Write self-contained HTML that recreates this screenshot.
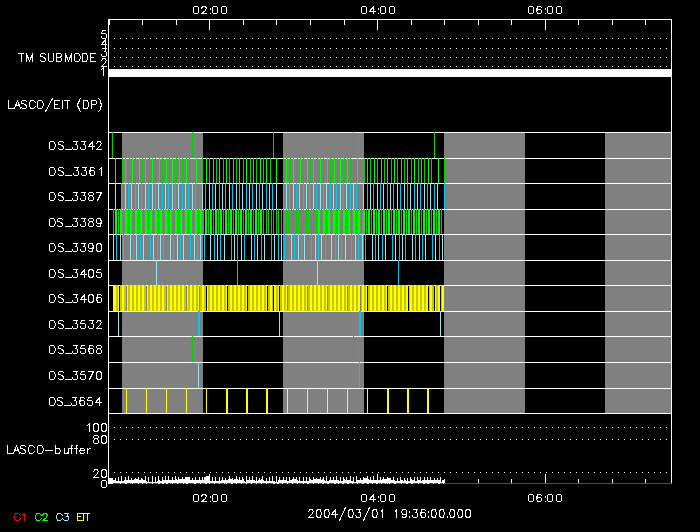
<!DOCTYPE html>
<html><head><meta charset="utf-8"><style>
html,body{margin:0;padding:0;background:#000;width:700px;height:532px;overflow:hidden}
svg{display:block}
text{font-family:"Liberation Sans",sans-serif;white-space:pre}
</style></head><body>
<svg width="700" height="532" viewBox="0 0 700 532" shape-rendering="crispEdges">
<rect width="700" height="532" fill="#000"/>
<rect x="122" y="132" width="81" height="281" fill="#808080"/>
<rect x="283" y="132" width="81" height="281" fill="#808080"/>
<rect x="444" y="132" width="81" height="281" fill="#808080"/>
<rect x="605" y="132" width="66" height="281" fill="#808080"/>
<rect x="108" y="132" width="564" height="1" fill="#ffffff"/>
<rect x="108" y="158" width="564" height="1" fill="#ffffff"/>
<rect x="108" y="183" width="564" height="1" fill="#ffffff"/>
<rect x="108" y="209" width="564" height="1" fill="#ffffff"/>
<rect x="108" y="234" width="564" height="1" fill="#ffffff"/>
<rect x="108" y="260" width="564" height="1" fill="#ffffff"/>
<rect x="108" y="285" width="564" height="1" fill="#ffffff"/>
<rect x="108" y="311" width="564" height="1" fill="#ffffff"/>
<rect x="108" y="336" width="564" height="1" fill="#ffffff"/>
<rect x="108" y="362" width="564" height="1" fill="#ffffff"/>
<rect x="108" y="388" width="564" height="1" fill="#ffffff"/>
<rect x="108" y="413" width="564" height="1" fill="#ffffff"/>
<rect x="112" y="132" width="1" height="26" fill="#00d200"/>
<rect x="192" y="132" width="1" height="26" fill="#00d200"/>
<rect x="273" y="132" width="1" height="26" fill="#00d200"/>
<rect x="353" y="132" width="1" height="26" fill="#00d200"/>
<rect x="434" y="132" width="1" height="26" fill="#00d200"/>
<rect x="115" y="158" width="1" height="25" fill="#00ff00"/>
<rect x="122" y="158" width="1" height="25" fill="#00d200"/>
<rect x="125" y="158" width="1" height="25" fill="#00ff00"/>
<rect x="129" y="158" width="1" height="25" fill="#00d200"/>
<rect x="132" y="158" width="1" height="25" fill="#00ff00"/>
<rect x="135" y="158" width="1" height="25" fill="#00d200"/>
<rect x="139" y="158" width="1" height="25" fill="#00ff00"/>
<rect x="142" y="158" width="1" height="25" fill="#00d200"/>
<rect x="145" y="158" width="1" height="25" fill="#00ff00"/>
<rect x="149" y="158" width="1" height="25" fill="#00d200"/>
<rect x="152" y="158" width="1" height="25" fill="#00ff00"/>
<rect x="155" y="158" width="1" height="25" fill="#00d200"/>
<rect x="159" y="158" width="1" height="25" fill="#00ff00"/>
<rect x="162" y="158" width="1" height="25" fill="#00d200"/>
<rect x="166" y="158" width="1" height="25" fill="#00ff00"/>
<rect x="169" y="158" width="1" height="25" fill="#00d200"/>
<rect x="172" y="158" width="1" height="25" fill="#00ff00"/>
<rect x="176" y="158" width="1" height="25" fill="#00d200"/>
<rect x="179" y="158" width="1" height="25" fill="#00ff00"/>
<rect x="182" y="158" width="1" height="25" fill="#00d200"/>
<rect x="186" y="158" width="1" height="25" fill="#00ff00"/>
<rect x="189" y="158" width="1" height="25" fill="#00d200"/>
<rect x="196" y="158" width="1" height="25" fill="#00ff00"/>
<rect x="202" y="158" width="1" height="25" fill="#00d200"/>
<rect x="206" y="158" width="1" height="25" fill="#00ff00"/>
<rect x="209" y="158" width="1" height="25" fill="#00d200"/>
<rect x="213" y="158" width="1" height="25" fill="#00ff00"/>
<rect x="216" y="158" width="1" height="25" fill="#00d200"/>
<rect x="219" y="158" width="1" height="25" fill="#00ff00"/>
<rect x="223" y="158" width="1" height="25" fill="#00d200"/>
<rect x="226" y="158" width="1" height="25" fill="#00ff00"/>
<rect x="229" y="158" width="1" height="25" fill="#00d200"/>
<rect x="233" y="158" width="1" height="25" fill="#00ff00"/>
<rect x="236" y="158" width="1" height="25" fill="#00d200"/>
<rect x="239" y="158" width="1" height="25" fill="#00ff00"/>
<rect x="243" y="158" width="1" height="25" fill="#00d200"/>
<rect x="246" y="158" width="1" height="25" fill="#00ff00"/>
<rect x="250" y="158" width="1" height="25" fill="#00d200"/>
<rect x="253" y="158" width="1" height="25" fill="#00ff00"/>
<rect x="256" y="158" width="1" height="25" fill="#00d200"/>
<rect x="260" y="158" width="1" height="25" fill="#00ff00"/>
<rect x="263" y="158" width="1" height="25" fill="#00d200"/>
<rect x="266" y="158" width="1" height="25" fill="#00ff00"/>
<rect x="270" y="158" width="1" height="25" fill="#00d200"/>
<rect x="276" y="158" width="1" height="25" fill="#00ff00"/>
<rect x="283" y="158" width="1" height="25" fill="#00d200"/>
<rect x="286" y="158" width="1" height="25" fill="#00ff00"/>
<rect x="290" y="158" width="1" height="25" fill="#00d200"/>
<rect x="293" y="158" width="1" height="25" fill="#00ff00"/>
<rect x="297" y="158" width="1" height="25" fill="#00d200"/>
<rect x="300" y="158" width="1" height="25" fill="#00ff00"/>
<rect x="303" y="158" width="1" height="25" fill="#00d200"/>
<rect x="307" y="158" width="1" height="25" fill="#00ff00"/>
<rect x="310" y="158" width="1" height="25" fill="#00d200"/>
<rect x="313" y="158" width="1" height="25" fill="#00ff00"/>
<rect x="317" y="158" width="1" height="25" fill="#00d200"/>
<rect x="320" y="158" width="1" height="25" fill="#00ff00"/>
<rect x="323" y="158" width="1" height="25" fill="#00d200"/>
<rect x="327" y="158" width="1" height="25" fill="#00ff00"/>
<rect x="330" y="158" width="1" height="25" fill="#00d200"/>
<rect x="334" y="158" width="1" height="25" fill="#00ff00"/>
<rect x="337" y="158" width="1" height="25" fill="#00d200"/>
<rect x="340" y="158" width="1" height="25" fill="#00ff00"/>
<rect x="344" y="158" width="1" height="25" fill="#00d200"/>
<rect x="347" y="158" width="1" height="25" fill="#00ff00"/>
<rect x="350" y="158" width="1" height="25" fill="#00d200"/>
<rect x="357" y="158" width="1" height="25" fill="#00ff00"/>
<rect x="364" y="158" width="1" height="25" fill="#00d200"/>
<rect x="367" y="158" width="1" height="25" fill="#00ff00"/>
<rect x="370" y="158" width="1" height="25" fill="#00d200"/>
<rect x="374" y="158" width="1" height="25" fill="#00ff00"/>
<rect x="377" y="158" width="1" height="25" fill="#00d200"/>
<rect x="381" y="158" width="1" height="25" fill="#00ff00"/>
<rect x="384" y="158" width="1" height="25" fill="#00d200"/>
<rect x="387" y="158" width="1" height="25" fill="#00ff00"/>
<rect x="391" y="158" width="1" height="25" fill="#00d200"/>
<rect x="394" y="158" width="1" height="25" fill="#00ff00"/>
<rect x="397" y="158" width="1" height="25" fill="#00d200"/>
<rect x="401" y="158" width="1" height="25" fill="#00ff00"/>
<rect x="404" y="158" width="1" height="25" fill="#00d200"/>
<rect x="407" y="158" width="1" height="25" fill="#00ff00"/>
<rect x="411" y="158" width="1" height="25" fill="#00d200"/>
<rect x="414" y="158" width="1" height="25" fill="#00ff00"/>
<rect x="418" y="158" width="1" height="25" fill="#00d200"/>
<rect x="421" y="158" width="1" height="25" fill="#00ff00"/>
<rect x="424" y="158" width="1" height="25" fill="#00d200"/>
<rect x="428" y="158" width="1" height="25" fill="#00ff00"/>
<rect x="431" y="158" width="1" height="25" fill="#00d200"/>
<rect x="438" y="158" width="1" height="25" fill="#00ff00"/>
<rect x="444" y="158" width="1" height="25" fill="#00d200"/>
<rect x="115" y="183" width="1" height="26" fill="#96e6f0"/>
<rect x="121" y="183" width="1" height="26" fill="#00c8f0"/>
<rect x="125" y="183" width="1" height="26" fill="#96e6f0"/>
<rect x="128" y="183" width="1" height="26" fill="#00c8f0"/>
<rect x="131" y="183" width="1" height="26" fill="#96e6f0"/>
<rect x="135" y="183" width="1" height="26" fill="#00c8f0"/>
<rect x="138" y="183" width="1" height="26" fill="#96e6f0"/>
<rect x="141" y="183" width="1" height="26" fill="#00c8f0"/>
<rect x="145" y="183" width="1" height="26" fill="#96e6f0"/>
<rect x="148" y="183" width="1" height="26" fill="#00c8f0"/>
<rect x="152" y="183" width="1" height="26" fill="#96e6f0"/>
<rect x="155" y="183" width="1" height="26" fill="#00c8f0"/>
<rect x="158" y="183" width="1" height="26" fill="#96e6f0"/>
<rect x="162" y="183" width="1" height="26" fill="#00c8f0"/>
<rect x="165" y="183" width="1" height="26" fill="#96e6f0"/>
<rect x="168" y="183" width="1" height="26" fill="#00c8f0"/>
<rect x="172" y="183" width="1" height="26" fill="#96e6f0"/>
<rect x="175" y="183" width="1" height="26" fill="#00c8f0"/>
<rect x="178" y="183" width="1" height="26" fill="#96e6f0"/>
<rect x="182" y="183" width="1" height="26" fill="#00c8f0"/>
<rect x="185" y="183" width="1" height="26" fill="#96e6f0"/>
<rect x="188" y="183" width="1" height="26" fill="#00c8f0"/>
<rect x="192" y="183" width="1" height="26" fill="#96e6f0"/>
<rect x="195" y="183" width="1" height="26" fill="#00c8f0"/>
<rect x="202" y="183" width="1" height="26" fill="#96e6f0"/>
<rect x="205" y="183" width="1" height="26" fill="#00c8f0"/>
<rect x="209" y="183" width="1" height="26" fill="#96e6f0"/>
<rect x="212" y="183" width="1" height="26" fill="#00c8f0"/>
<rect x="215" y="183" width="1" height="26" fill="#96e6f0"/>
<rect x="219" y="183" width="1" height="26" fill="#00c8f0"/>
<rect x="222" y="183" width="1" height="26" fill="#96e6f0"/>
<rect x="225" y="183" width="1" height="26" fill="#00c8f0"/>
<rect x="229" y="183" width="1" height="26" fill="#96e6f0"/>
<rect x="232" y="183" width="1" height="26" fill="#00c8f0"/>
<rect x="236" y="183" width="1" height="26" fill="#96e6f0"/>
<rect x="239" y="183" width="1" height="26" fill="#00c8f0"/>
<rect x="242" y="183" width="1" height="26" fill="#96e6f0"/>
<rect x="246" y="183" width="1" height="26" fill="#00c8f0"/>
<rect x="249" y="183" width="1" height="26" fill="#96e6f0"/>
<rect x="252" y="183" width="1" height="26" fill="#00c8f0"/>
<rect x="256" y="183" width="1" height="26" fill="#96e6f0"/>
<rect x="259" y="183" width="1" height="26" fill="#00c8f0"/>
<rect x="262" y="183" width="1" height="26" fill="#96e6f0"/>
<rect x="266" y="183" width="1" height="26" fill="#00c8f0"/>
<rect x="269" y="183" width="1" height="26" fill="#96e6f0"/>
<rect x="272" y="183" width="1" height="26" fill="#00c8f0"/>
<rect x="276" y="183" width="1" height="26" fill="#96e6f0"/>
<rect x="283" y="183" width="1" height="26" fill="#00c8f0"/>
<rect x="286" y="183" width="1" height="26" fill="#96e6f0"/>
<rect x="289" y="183" width="1" height="26" fill="#00c8f0"/>
<rect x="293" y="183" width="1" height="26" fill="#96e6f0"/>
<rect x="296" y="183" width="1" height="26" fill="#00c8f0"/>
<rect x="299" y="183" width="1" height="26" fill="#96e6f0"/>
<rect x="303" y="183" width="1" height="26" fill="#00c8f0"/>
<rect x="306" y="183" width="1" height="26" fill="#96e6f0"/>
<rect x="309" y="183" width="1" height="26" fill="#00c8f0"/>
<rect x="313" y="183" width="1" height="26" fill="#96e6f0"/>
<rect x="316" y="183" width="1" height="26" fill="#00c8f0"/>
<rect x="320" y="183" width="1" height="26" fill="#96e6f0"/>
<rect x="323" y="183" width="1" height="26" fill="#00c8f0"/>
<rect x="326" y="183" width="1" height="26" fill="#96e6f0"/>
<rect x="330" y="183" width="1" height="26" fill="#00c8f0"/>
<rect x="333" y="183" width="1" height="26" fill="#96e6f0"/>
<rect x="336" y="183" width="1" height="26" fill="#00c8f0"/>
<rect x="340" y="183" width="1" height="26" fill="#96e6f0"/>
<rect x="343" y="183" width="1" height="26" fill="#00c8f0"/>
<rect x="346" y="183" width="1" height="26" fill="#96e6f0"/>
<rect x="350" y="183" width="1" height="26" fill="#00c8f0"/>
<rect x="353" y="183" width="1" height="26" fill="#96e6f0"/>
<rect x="356" y="183" width="1" height="26" fill="#00c8f0"/>
<rect x="363" y="183" width="1" height="26" fill="#96e6f0"/>
<rect x="367" y="183" width="1" height="26" fill="#00c8f0"/>
<rect x="370" y="183" width="1" height="26" fill="#96e6f0"/>
<rect x="373" y="183" width="1" height="26" fill="#00c8f0"/>
<rect x="377" y="183" width="1" height="26" fill="#96e6f0"/>
<rect x="380" y="183" width="1" height="26" fill="#00c8f0"/>
<rect x="383" y="183" width="1" height="26" fill="#96e6f0"/>
<rect x="387" y="183" width="1" height="26" fill="#00c8f0"/>
<rect x="390" y="183" width="1" height="26" fill="#96e6f0"/>
<rect x="393" y="183" width="1" height="26" fill="#00c8f0"/>
<rect x="397" y="183" width="1" height="26" fill="#96e6f0"/>
<rect x="400" y="183" width="1" height="26" fill="#00c8f0"/>
<rect x="404" y="183" width="1" height="26" fill="#96e6f0"/>
<rect x="407" y="183" width="1" height="26" fill="#00c8f0"/>
<rect x="410" y="183" width="1" height="26" fill="#96e6f0"/>
<rect x="414" y="183" width="1" height="26" fill="#00c8f0"/>
<rect x="417" y="183" width="1" height="26" fill="#96e6f0"/>
<rect x="420" y="183" width="1" height="26" fill="#00c8f0"/>
<rect x="424" y="183" width="1" height="26" fill="#96e6f0"/>
<rect x="427" y="183" width="1" height="26" fill="#00c8f0"/>
<rect x="430" y="183" width="1" height="26" fill="#96e6f0"/>
<rect x="434" y="183" width="1" height="26" fill="#00c8f0"/>
<rect x="437" y="183" width="1" height="26" fill="#96e6f0"/>
<rect x="444" y="183" width="1" height="26" fill="#00c8f0"/>
<rect x="113" y="209" width="1" height="25" fill="#00d200"/>
<rect x="115" y="209" width="2" height="25" fill="#00ff00"/>
<rect x="118" y="209" width="1" height="25" fill="#00d200"/>
<rect x="120" y="209" width="2" height="25" fill="#00ff00"/>
<rect x="123" y="209" width="1" height="25" fill="#00d200"/>
<rect x="125" y="209" width="2" height="25" fill="#00ff00"/>
<rect x="128" y="209" width="1" height="25" fill="#00d200"/>
<rect x="130" y="209" width="2" height="25" fill="#00ff00"/>
<rect x="133" y="209" width="1" height="25" fill="#00d200"/>
<rect x="135" y="209" width="2" height="25" fill="#00ff00"/>
<rect x="138" y="209" width="1" height="25" fill="#00d200"/>
<rect x="140" y="209" width="2" height="25" fill="#00ff00"/>
<rect x="143" y="209" width="1" height="25" fill="#00d200"/>
<rect x="145" y="209" width="2" height="25" fill="#00ff00"/>
<rect x="148" y="209" width="1" height="25" fill="#00d200"/>
<rect x="150" y="209" width="2" height="25" fill="#00ff00"/>
<rect x="153" y="209" width="1" height="25" fill="#00d200"/>
<rect x="155" y="209" width="2" height="25" fill="#00ff00"/>
<rect x="158" y="209" width="1" height="25" fill="#00d200"/>
<rect x="160" y="209" width="2" height="25" fill="#00ff00"/>
<rect x="163" y="209" width="1" height="25" fill="#00d200"/>
<rect x="165" y="209" width="2" height="25" fill="#00ff00"/>
<rect x="168" y="209" width="1" height="25" fill="#00d200"/>
<rect x="170" y="209" width="2" height="25" fill="#00ff00"/>
<rect x="173" y="209" width="1" height="25" fill="#00d200"/>
<rect x="175" y="209" width="2" height="25" fill="#00ff00"/>
<rect x="178" y="209" width="1" height="25" fill="#00d200"/>
<rect x="180" y="209" width="2" height="25" fill="#00ff00"/>
<rect x="183" y="209" width="1" height="25" fill="#00d200"/>
<rect x="185" y="209" width="2" height="25" fill="#00ff00"/>
<rect x="188" y="209" width="1" height="25" fill="#00d200"/>
<rect x="190" y="209" width="2" height="25" fill="#00ff00"/>
<rect x="193" y="209" width="1" height="25" fill="#00d200"/>
<rect x="195" y="209" width="2" height="25" fill="#00ff00"/>
<rect x="198" y="209" width="1" height="25" fill="#00d200"/>
<rect x="200" y="209" width="2" height="25" fill="#00ff00"/>
<rect x="203" y="209" width="1" height="25" fill="#00d200"/>
<rect x="205" y="209" width="2" height="25" fill="#00ff00"/>
<rect x="208" y="209" width="1" height="25" fill="#00d200"/>
<rect x="210" y="209" width="2" height="25" fill="#00ff00"/>
<rect x="213" y="209" width="1" height="25" fill="#00d200"/>
<rect x="215" y="209" width="2" height="25" fill="#00ff00"/>
<rect x="218" y="209" width="1" height="25" fill="#00d200"/>
<rect x="220" y="209" width="2" height="25" fill="#00ff00"/>
<rect x="223" y="209" width="1" height="25" fill="#00d200"/>
<rect x="225" y="209" width="2" height="25" fill="#00ff00"/>
<rect x="228" y="209" width="1" height="25" fill="#00d200"/>
<rect x="230" y="209" width="2" height="25" fill="#00ff00"/>
<rect x="233" y="209" width="1" height="25" fill="#00d200"/>
<rect x="235" y="209" width="2" height="25" fill="#00ff00"/>
<rect x="238" y="209" width="1" height="25" fill="#00d200"/>
<rect x="240" y="209" width="2" height="25" fill="#00ff00"/>
<rect x="243" y="209" width="1" height="25" fill="#00d200"/>
<rect x="245" y="209" width="2" height="25" fill="#00ff00"/>
<rect x="248" y="209" width="1" height="25" fill="#00d200"/>
<rect x="250" y="209" width="2" height="25" fill="#00ff00"/>
<rect x="253" y="209" width="1" height="25" fill="#00d200"/>
<rect x="255" y="209" width="2" height="25" fill="#00ff00"/>
<rect x="258" y="209" width="1" height="25" fill="#00d200"/>
<rect x="260" y="209" width="2" height="25" fill="#00ff00"/>
<rect x="263" y="209" width="1" height="25" fill="#00d200"/>
<rect x="266" y="209" width="1" height="25" fill="#00d200"/>
<rect x="268" y="209" width="1" height="25" fill="#00d200"/>
<rect x="271" y="209" width="1" height="25" fill="#00d200"/>
<rect x="273" y="209" width="1" height="25" fill="#00d200"/>
<rect x="276" y="209" width="1" height="25" fill="#00d200"/>
<rect x="278" y="209" width="1" height="25" fill="#00d200"/>
<rect x="281" y="209" width="1" height="25" fill="#00d200"/>
<rect x="283" y="209" width="1" height="25" fill="#00d200"/>
<rect x="286" y="209" width="1" height="25" fill="#00d200"/>
<rect x="288" y="209" width="1" height="25" fill="#00d200"/>
<rect x="291" y="209" width="1" height="25" fill="#00d200"/>
<rect x="293" y="209" width="1" height="25" fill="#00d200"/>
<rect x="296" y="209" width="1" height="25" fill="#00d200"/>
<rect x="298" y="209" width="1" height="25" fill="#00d200"/>
<rect x="301" y="209" width="1" height="25" fill="#00d200"/>
<rect x="303" y="209" width="1" height="25" fill="#00d200"/>
<rect x="306" y="209" width="1" height="25" fill="#00d200"/>
<rect x="308" y="209" width="1" height="25" fill="#00d200"/>
<rect x="311" y="209" width="1" height="25" fill="#00d200"/>
<rect x="313" y="209" width="1" height="25" fill="#00d200"/>
<rect x="316" y="209" width="1" height="25" fill="#00d200"/>
<rect x="318" y="209" width="2" height="25" fill="#00ff00"/>
<rect x="321" y="209" width="1" height="25" fill="#00d200"/>
<rect x="323" y="209" width="2" height="25" fill="#00ff00"/>
<rect x="326" y="209" width="1" height="25" fill="#00d200"/>
<rect x="328" y="209" width="2" height="25" fill="#00ff00"/>
<rect x="331" y="209" width="1" height="25" fill="#00d200"/>
<rect x="333" y="209" width="2" height="25" fill="#00ff00"/>
<rect x="336" y="209" width="1" height="25" fill="#00d200"/>
<rect x="338" y="209" width="2" height="25" fill="#00ff00"/>
<rect x="341" y="209" width="1" height="25" fill="#00d200"/>
<rect x="343" y="209" width="2" height="25" fill="#00ff00"/>
<rect x="346" y="209" width="1" height="25" fill="#00d200"/>
<rect x="348" y="209" width="2" height="25" fill="#00ff00"/>
<rect x="351" y="209" width="1" height="25" fill="#00d200"/>
<rect x="353" y="209" width="2" height="25" fill="#00ff00"/>
<rect x="356" y="209" width="1" height="25" fill="#00d200"/>
<rect x="358" y="209" width="2" height="25" fill="#00ff00"/>
<rect x="361" y="209" width="1" height="25" fill="#00d200"/>
<rect x="363" y="209" width="2" height="25" fill="#00ff00"/>
<rect x="366" y="209" width="1" height="25" fill="#00d200"/>
<rect x="368" y="209" width="2" height="25" fill="#00ff00"/>
<rect x="371" y="209" width="1" height="25" fill="#00d200"/>
<rect x="373" y="209" width="2" height="25" fill="#00ff00"/>
<rect x="376" y="209" width="1" height="25" fill="#00d200"/>
<rect x="378" y="209" width="2" height="25" fill="#00ff00"/>
<rect x="381" y="209" width="1" height="25" fill="#00d200"/>
<rect x="383" y="209" width="2" height="25" fill="#00ff00"/>
<rect x="386" y="209" width="1" height="25" fill="#00d200"/>
<rect x="388" y="209" width="2" height="25" fill="#00ff00"/>
<rect x="391" y="209" width="1" height="25" fill="#00d200"/>
<rect x="393" y="209" width="2" height="25" fill="#00ff00"/>
<rect x="396" y="209" width="1" height="25" fill="#00d200"/>
<rect x="398" y="209" width="2" height="25" fill="#00ff00"/>
<rect x="401" y="209" width="1" height="25" fill="#00d200"/>
<rect x="403" y="209" width="2" height="25" fill="#00ff00"/>
<rect x="406" y="209" width="1" height="25" fill="#00d200"/>
<rect x="408" y="209" width="2" height="25" fill="#00ff00"/>
<rect x="411" y="209" width="1" height="25" fill="#00d200"/>
<rect x="413" y="209" width="2" height="25" fill="#00ff00"/>
<rect x="416" y="209" width="1" height="25" fill="#00d200"/>
<rect x="418" y="209" width="2" height="25" fill="#00ff00"/>
<rect x="421" y="209" width="1" height="25" fill="#00d200"/>
<rect x="423" y="209" width="2" height="25" fill="#00ff00"/>
<rect x="426" y="209" width="1" height="25" fill="#00d200"/>
<rect x="428" y="209" width="2" height="25" fill="#00ff00"/>
<rect x="431" y="209" width="1" height="25" fill="#00d200"/>
<rect x="433" y="209" width="2" height="25" fill="#00ff00"/>
<rect x="436" y="209" width="1" height="25" fill="#00d200"/>
<rect x="438" y="209" width="2" height="25" fill="#00ff00"/>
<rect x="441" y="209" width="1" height="25" fill="#00d200"/>
<rect x="113" y="234" width="1" height="26" fill="#96e6f0"/>
<rect x="116" y="234" width="1" height="26" fill="#00c8f0"/>
<rect x="120" y="234" width="1" height="26" fill="#96e6f0"/>
<rect x="123" y="234" width="1" height="26" fill="#00c8f0"/>
<rect x="130" y="234" width="1" height="26" fill="#96e6f0"/>
<rect x="133" y="234" width="1" height="26" fill="#00c8f0"/>
<rect x="136" y="234" width="1" height="26" fill="#96e6f0"/>
<rect x="140" y="234" width="1" height="26" fill="#00c8f0"/>
<rect x="143" y="234" width="1" height="26" fill="#96e6f0"/>
<rect x="150" y="234" width="1" height="26" fill="#00c8f0"/>
<rect x="153" y="234" width="1" height="26" fill="#96e6f0"/>
<rect x="157" y="234" width="1" height="26" fill="#00c8f0"/>
<rect x="160" y="234" width="1" height="26" fill="#96e6f0"/>
<rect x="163" y="234" width="1" height="26" fill="#00c8f0"/>
<rect x="170" y="234" width="1" height="26" fill="#96e6f0"/>
<rect x="173" y="234" width="1" height="26" fill="#00c8f0"/>
<rect x="177" y="234" width="1" height="26" fill="#96e6f0"/>
<rect x="180" y="234" width="1" height="26" fill="#00c8f0"/>
<rect x="183" y="234" width="1" height="26" fill="#96e6f0"/>
<rect x="190" y="234" width="1" height="26" fill="#00c8f0"/>
<rect x="194" y="234" width="1" height="26" fill="#96e6f0"/>
<rect x="197" y="234" width="1" height="26" fill="#00c8f0"/>
<rect x="200" y="234" width="1" height="26" fill="#96e6f0"/>
<rect x="204" y="234" width="1" height="26" fill="#00c8f0"/>
<rect x="210" y="234" width="1" height="26" fill="#96e6f0"/>
<rect x="214" y="234" width="1" height="26" fill="#00c8f0"/>
<rect x="217" y="234" width="1" height="26" fill="#96e6f0"/>
<rect x="220" y="234" width="1" height="26" fill="#00c8f0"/>
<rect x="224" y="234" width="1" height="26" fill="#96e6f0"/>
<rect x="231" y="234" width="1" height="26" fill="#00c8f0"/>
<rect x="234" y="234" width="1" height="26" fill="#96e6f0"/>
<rect x="237" y="234" width="1" height="26" fill="#00c8f0"/>
<rect x="241" y="234" width="1" height="26" fill="#96e6f0"/>
<rect x="244" y="234" width="1" height="26" fill="#00c8f0"/>
<rect x="251" y="234" width="1" height="26" fill="#96e6f0"/>
<rect x="254" y="234" width="1" height="26" fill="#00c8f0"/>
<rect x="257" y="234" width="1" height="26" fill="#96e6f0"/>
<rect x="261" y="234" width="1" height="26" fill="#00c8f0"/>
<rect x="264" y="234" width="1" height="26" fill="#96e6f0"/>
<rect x="271" y="234" width="1" height="26" fill="#00c8f0"/>
<rect x="274" y="234" width="1" height="26" fill="#96e6f0"/>
<rect x="278" y="234" width="1" height="26" fill="#00c8f0"/>
<rect x="281" y="234" width="1" height="26" fill="#96e6f0"/>
<rect x="284" y="234" width="1" height="26" fill="#00c8f0"/>
<rect x="291" y="234" width="1" height="26" fill="#96e6f0"/>
<rect x="294" y="234" width="1" height="26" fill="#00c8f0"/>
<rect x="298" y="234" width="1" height="26" fill="#96e6f0"/>
<rect x="301" y="234" width="1" height="26" fill="#00c8f0"/>
<rect x="304" y="234" width="1" height="26" fill="#96e6f0"/>
<rect x="311" y="234" width="1" height="26" fill="#00c8f0"/>
<rect x="315" y="234" width="1" height="26" fill="#96e6f0"/>
<rect x="318" y="234" width="1" height="26" fill="#00c8f0"/>
<rect x="321" y="234" width="1" height="26" fill="#96e6f0"/>
<rect x="325" y="234" width="1" height="26" fill="#00c8f0"/>
<rect x="331" y="234" width="1" height="26" fill="#96e6f0"/>
<rect x="335" y="234" width="1" height="26" fill="#00c8f0"/>
<rect x="338" y="234" width="1" height="26" fill="#96e6f0"/>
<rect x="341" y="234" width="1" height="26" fill="#00c8f0"/>
<rect x="345" y="234" width="1" height="26" fill="#96e6f0"/>
<rect x="351" y="234" width="1" height="26" fill="#00c8f0"/>
<rect x="355" y="234" width="1" height="26" fill="#96e6f0"/>
<rect x="358" y="234" width="1" height="26" fill="#00c8f0"/>
<rect x="362" y="234" width="1" height="26" fill="#96e6f0"/>
<rect x="365" y="234" width="1" height="26" fill="#00c8f0"/>
<rect x="372" y="234" width="1" height="26" fill="#96e6f0"/>
<rect x="375" y="234" width="1" height="26" fill="#00c8f0"/>
<rect x="378" y="234" width="1" height="26" fill="#96e6f0"/>
<rect x="382" y="234" width="1" height="26" fill="#00c8f0"/>
<rect x="385" y="234" width="1" height="26" fill="#96e6f0"/>
<rect x="392" y="234" width="1" height="26" fill="#00c8f0"/>
<rect x="395" y="234" width="1" height="26" fill="#96e6f0"/>
<rect x="399" y="234" width="1" height="26" fill="#00c8f0"/>
<rect x="402" y="234" width="1" height="26" fill="#96e6f0"/>
<rect x="405" y="234" width="1" height="26" fill="#00c8f0"/>
<rect x="412" y="234" width="1" height="26" fill="#96e6f0"/>
<rect x="415" y="234" width="1" height="26" fill="#00c8f0"/>
<rect x="419" y="234" width="1" height="26" fill="#96e6f0"/>
<rect x="422" y="234" width="1" height="26" fill="#00c8f0"/>
<rect x="425" y="234" width="1" height="26" fill="#96e6f0"/>
<rect x="432" y="234" width="1" height="26" fill="#00c8f0"/>
<rect x="435" y="234" width="1" height="26" fill="#96e6f0"/>
<rect x="439" y="234" width="1" height="26" fill="#00c8f0"/>
<rect x="442" y="234" width="1" height="26" fill="#96e6f0"/>
<rect x="156" y="260" width="1" height="25" fill="#96e6f0"/>
<rect x="237" y="260" width="1" height="25" fill="#00c8f0"/>
<rect x="317" y="260" width="1" height="25" fill="#96e6f0"/>
<rect x="398" y="260" width="1" height="25" fill="#00c8f0"/>
<rect x="113" y="285" width="331" height="26" fill="#ffff00"/>
<rect x="116" y="285" width="2" height="26" fill="#c8c800"/>
<rect x="120" y="285" width="2" height="26" fill="#c8c800"/>
<rect x="124" y="285" width="2" height="26" fill="#c8c800"/>
<rect x="128" y="285" width="2" height="26" fill="#c8c800"/>
<rect x="132" y="285" width="2" height="26" fill="#c8c800"/>
<rect x="136" y="285" width="2" height="26" fill="#c8c800"/>
<rect x="140" y="285" width="2" height="26" fill="#c8c800"/>
<rect x="144" y="285" width="2" height="26" fill="#c8c800"/>
<rect x="148" y="285" width="2" height="26" fill="#c8c800"/>
<rect x="152" y="285" width="2" height="26" fill="#c8c800"/>
<rect x="156" y="285" width="2" height="26" fill="#c8c800"/>
<rect x="160" y="285" width="2" height="26" fill="#c8c800"/>
<rect x="164" y="285" width="2" height="26" fill="#c8c800"/>
<rect x="168" y="285" width="2" height="26" fill="#c8c800"/>
<rect x="172" y="285" width="2" height="26" fill="#c8c800"/>
<rect x="176" y="285" width="2" height="26" fill="#c8c800"/>
<rect x="180" y="285" width="2" height="26" fill="#c8c800"/>
<rect x="184" y="285" width="2" height="26" fill="#c8c800"/>
<rect x="188" y="285" width="2" height="26" fill="#c8c800"/>
<rect x="192" y="285" width="2" height="26" fill="#c8c800"/>
<rect x="196" y="285" width="2" height="26" fill="#c8c800"/>
<rect x="200" y="285" width="2" height="26" fill="#c8c800"/>
<rect x="204" y="285" width="2" height="26" fill="#c8c800"/>
<rect x="208" y="285" width="2" height="26" fill="#c8c800"/>
<rect x="212" y="285" width="2" height="26" fill="#c8c800"/>
<rect x="216" y="285" width="2" height="26" fill="#c8c800"/>
<rect x="220" y="285" width="2" height="26" fill="#c8c800"/>
<rect x="224" y="285" width="2" height="26" fill="#c8c800"/>
<rect x="228" y="285" width="2" height="26" fill="#c8c800"/>
<rect x="232" y="285" width="2" height="26" fill="#c8c800"/>
<rect x="236" y="285" width="2" height="26" fill="#c8c800"/>
<rect x="240" y="285" width="2" height="26" fill="#c8c800"/>
<rect x="244" y="285" width="2" height="26" fill="#c8c800"/>
<rect x="248" y="285" width="2" height="26" fill="#c8c800"/>
<rect x="252" y="285" width="2" height="26" fill="#c8c800"/>
<rect x="256" y="285" width="2" height="26" fill="#c8c800"/>
<rect x="260" y="285" width="2" height="26" fill="#c8c800"/>
<rect x="264" y="285" width="2" height="26" fill="#c8c800"/>
<rect x="268" y="285" width="2" height="26" fill="#c8c800"/>
<rect x="272" y="285" width="2" height="26" fill="#c8c800"/>
<rect x="276" y="285" width="2" height="26" fill="#c8c800"/>
<rect x="280" y="285" width="2" height="26" fill="#c8c800"/>
<rect x="284" y="285" width="2" height="26" fill="#c8c800"/>
<rect x="288" y="285" width="2" height="26" fill="#c8c800"/>
<rect x="292" y="285" width="2" height="26" fill="#c8c800"/>
<rect x="296" y="285" width="2" height="26" fill="#c8c800"/>
<rect x="300" y="285" width="2" height="26" fill="#c8c800"/>
<rect x="304" y="285" width="2" height="26" fill="#c8c800"/>
<rect x="308" y="285" width="2" height="26" fill="#c8c800"/>
<rect x="312" y="285" width="2" height="26" fill="#c8c800"/>
<rect x="316" y="285" width="2" height="26" fill="#c8c800"/>
<rect x="320" y="285" width="2" height="26" fill="#c8c800"/>
<rect x="324" y="285" width="2" height="26" fill="#c8c800"/>
<rect x="328" y="285" width="2" height="26" fill="#c8c800"/>
<rect x="332" y="285" width="2" height="26" fill="#c8c800"/>
<rect x="336" y="285" width="2" height="26" fill="#c8c800"/>
<rect x="340" y="285" width="2" height="26" fill="#c8c800"/>
<rect x="344" y="285" width="2" height="26" fill="#c8c800"/>
<rect x="348" y="285" width="2" height="26" fill="#c8c800"/>
<rect x="352" y="285" width="2" height="26" fill="#c8c800"/>
<rect x="356" y="285" width="2" height="26" fill="#c8c800"/>
<rect x="360" y="285" width="2" height="26" fill="#c8c800"/>
<rect x="364" y="285" width="2" height="26" fill="#c8c800"/>
<rect x="368" y="285" width="2" height="26" fill="#c8c800"/>
<rect x="372" y="285" width="2" height="26" fill="#c8c800"/>
<rect x="376" y="285" width="2" height="26" fill="#c8c800"/>
<rect x="380" y="285" width="2" height="26" fill="#c8c800"/>
<rect x="384" y="285" width="2" height="26" fill="#c8c800"/>
<rect x="388" y="285" width="2" height="26" fill="#c8c800"/>
<rect x="392" y="285" width="2" height="26" fill="#c8c800"/>
<rect x="396" y="285" width="2" height="26" fill="#c8c800"/>
<rect x="400" y="285" width="2" height="26" fill="#c8c800"/>
<rect x="404" y="285" width="2" height="26" fill="#c8c800"/>
<rect x="408" y="285" width="2" height="26" fill="#c8c800"/>
<rect x="412" y="285" width="2" height="26" fill="#c8c800"/>
<rect x="416" y="285" width="2" height="26" fill="#c8c800"/>
<rect x="420" y="285" width="2" height="26" fill="#c8c800"/>
<rect x="424" y="285" width="2" height="26" fill="#c8c800"/>
<rect x="428" y="285" width="2" height="26" fill="#c8c800"/>
<rect x="432" y="285" width="2" height="26" fill="#c8c800"/>
<rect x="436" y="285" width="2" height="26" fill="#c8c800"/>
<rect x="440" y="285" width="2" height="26" fill="#c8c800"/>
<rect x="119" y="285" width="1" height="26" fill="#000000"/>
<rect x="119" y="285" width="1" height="1" fill="#ffffff"/>
<rect x="126" y="285" width="1" height="26" fill="#808080"/>
<rect x="126" y="285" width="1" height="1" fill="#ffffff"/>
<rect x="146" y="285" width="1" height="26" fill="#808080"/>
<rect x="146" y="285" width="1" height="1" fill="#ffffff"/>
<rect x="166" y="285" width="1" height="26" fill="#808080"/>
<rect x="166" y="285" width="1" height="1" fill="#ffffff"/>
<rect x="186" y="285" width="1" height="26" fill="#808080"/>
<rect x="186" y="285" width="1" height="1" fill="#ffffff"/>
<rect x="199" y="285" width="1" height="26" fill="#808080"/>
<rect x="199" y="285" width="1" height="1" fill="#ffffff"/>
<rect x="206" y="285" width="1" height="26" fill="#000000"/>
<rect x="206" y="285" width="1" height="1" fill="#ffffff"/>
<rect x="227" y="285" width="1" height="26" fill="#000000"/>
<rect x="227" y="285" width="1" height="1" fill="#ffffff"/>
<rect x="247" y="285" width="1" height="26" fill="#000000"/>
<rect x="247" y="285" width="1" height="1" fill="#ffffff"/>
<rect x="267" y="285" width="1" height="26" fill="#000000"/>
<rect x="267" y="285" width="1" height="1" fill="#ffffff"/>
<rect x="273" y="285" width="1" height="26" fill="#000000"/>
<rect x="273" y="285" width="1" height="1" fill="#ffffff"/>
<rect x="279" y="285" width="1" height="26" fill="#000000"/>
<rect x="279" y="285" width="1" height="1" fill="#ffffff"/>
<rect x="287" y="285" width="1" height="26" fill="#808080"/>
<rect x="287" y="285" width="1" height="1" fill="#ffffff"/>
<rect x="307" y="285" width="1" height="26" fill="#808080"/>
<rect x="307" y="285" width="1" height="1" fill="#ffffff"/>
<rect x="327" y="285" width="1" height="26" fill="#808080"/>
<rect x="327" y="285" width="1" height="1" fill="#ffffff"/>
<rect x="347" y="285" width="1" height="26" fill="#808080"/>
<rect x="347" y="285" width="1" height="1" fill="#ffffff"/>
<rect x="360" y="285" width="1" height="26" fill="#808080"/>
<rect x="360" y="285" width="1" height="1" fill="#ffffff"/>
<rect x="367" y="285" width="1" height="26" fill="#000000"/>
<rect x="367" y="285" width="1" height="1" fill="#ffffff"/>
<rect x="387" y="285" width="1" height="26" fill="#000000"/>
<rect x="387" y="285" width="1" height="1" fill="#ffffff"/>
<rect x="408" y="285" width="1" height="26" fill="#000000"/>
<rect x="408" y="285" width="1" height="1" fill="#ffffff"/>
<rect x="428" y="285" width="1" height="26" fill="#000000"/>
<rect x="428" y="285" width="1" height="1" fill="#ffffff"/>
<rect x="434" y="285" width="1" height="26" fill="#000000"/>
<rect x="434" y="285" width="1" height="1" fill="#ffffff"/>
<rect x="440" y="285" width="1" height="26" fill="#000000"/>
<rect x="440" y="285" width="1" height="1" fill="#ffffff"/>
<rect x="118" y="311" width="1" height="25" fill="#96e6f0"/>
<rect x="198" y="311" width="2" height="25" fill="#00c8f0"/>
<rect x="279" y="311" width="1" height="25" fill="#96e6f0"/>
<rect x="359" y="311" width="2" height="25" fill="#00c8f0"/>
<rect x="440" y="311" width="1" height="25" fill="#96e6f0"/>
<rect x="192" y="336" width="1" height="26" fill="#00d200"/>
<rect x="353" y="336" width="1" height="26" fill="#00d200"/>
<rect x="198" y="362" width="1" height="26" fill="#96e6f0"/>
<rect x="359" y="362" width="1" height="26" fill="#00c8f0"/>
<rect x="126" y="388" width="1" height="25" fill="#ffff00"/>
<rect x="146" y="388" width="1" height="25" fill="#ffff00"/>
<rect x="166" y="388" width="1" height="25" fill="#ffff00"/>
<rect x="186" y="388" width="1" height="25" fill="#ffff00"/>
<rect x="206" y="388" width="1" height="25" fill="#ffff00"/>
<rect x="226" y="388" width="2" height="25" fill="#ffff00"/>
<rect x="246" y="388" width="2" height="25" fill="#ffff00"/>
<rect x="266" y="388" width="2" height="25" fill="#ffff00"/>
<rect x="287" y="388" width="1" height="25" fill="#ffff00"/>
<rect x="307" y="388" width="1" height="25" fill="#ffff00"/>
<rect x="327" y="388" width="1" height="25" fill="#ffff00"/>
<rect x="347" y="388" width="1" height="25" fill="#ffff00"/>
<rect x="367" y="388" width="1" height="25" fill="#ffff00"/>
<rect x="387" y="388" width="2" height="25" fill="#ffff00"/>
<rect x="407" y="388" width="2" height="25" fill="#ffff00"/>
<rect x="427" y="388" width="2" height="25" fill="#ffff00"/>
<rect x="114" y="38" width="1" height="1" fill="#ffffff"/>
<rect x="120" y="38" width="1" height="1" fill="#ffffff"/>
<rect x="126" y="38" width="1" height="1" fill="#ffffff"/>
<rect x="132" y="38" width="1" height="1" fill="#ffffff"/>
<rect x="138" y="38" width="1" height="1" fill="#ffffff"/>
<rect x="144" y="38" width="1" height="1" fill="#ffffff"/>
<rect x="150" y="38" width="1" height="1" fill="#ffffff"/>
<rect x="156" y="38" width="1" height="1" fill="#ffffff"/>
<rect x="162" y="38" width="1" height="1" fill="#ffffff"/>
<rect x="168" y="38" width="1" height="1" fill="#ffffff"/>
<rect x="174" y="38" width="1" height="1" fill="#ffffff"/>
<rect x="180" y="38" width="1" height="1" fill="#ffffff"/>
<rect x="186" y="38" width="1" height="1" fill="#ffffff"/>
<rect x="192" y="38" width="1" height="1" fill="#ffffff"/>
<rect x="198" y="38" width="1" height="1" fill="#ffffff"/>
<rect x="204" y="38" width="1" height="1" fill="#ffffff"/>
<rect x="210" y="38" width="1" height="1" fill="#ffffff"/>
<rect x="216" y="38" width="1" height="1" fill="#ffffff"/>
<rect x="222" y="38" width="1" height="1" fill="#ffffff"/>
<rect x="228" y="38" width="1" height="1" fill="#ffffff"/>
<rect x="234" y="38" width="1" height="1" fill="#ffffff"/>
<rect x="240" y="38" width="1" height="1" fill="#ffffff"/>
<rect x="246" y="38" width="1" height="1" fill="#ffffff"/>
<rect x="252" y="38" width="1" height="1" fill="#ffffff"/>
<rect x="258" y="38" width="1" height="1" fill="#ffffff"/>
<rect x="264" y="38" width="1" height="1" fill="#ffffff"/>
<rect x="270" y="38" width="1" height="1" fill="#ffffff"/>
<rect x="276" y="38" width="1" height="1" fill="#ffffff"/>
<rect x="282" y="38" width="1" height="1" fill="#ffffff"/>
<rect x="288" y="38" width="1" height="1" fill="#ffffff"/>
<rect x="294" y="38" width="1" height="1" fill="#ffffff"/>
<rect x="300" y="38" width="1" height="1" fill="#ffffff"/>
<rect x="306" y="38" width="1" height="1" fill="#ffffff"/>
<rect x="312" y="38" width="1" height="1" fill="#ffffff"/>
<rect x="318" y="38" width="1" height="1" fill="#ffffff"/>
<rect x="324" y="38" width="1" height="1" fill="#ffffff"/>
<rect x="330" y="38" width="1" height="1" fill="#ffffff"/>
<rect x="336" y="38" width="1" height="1" fill="#ffffff"/>
<rect x="342" y="38" width="1" height="1" fill="#ffffff"/>
<rect x="348" y="38" width="1" height="1" fill="#ffffff"/>
<rect x="354" y="38" width="1" height="1" fill="#ffffff"/>
<rect x="360" y="38" width="1" height="1" fill="#ffffff"/>
<rect x="366" y="38" width="1" height="1" fill="#ffffff"/>
<rect x="372" y="38" width="1" height="1" fill="#ffffff"/>
<rect x="378" y="38" width="1" height="1" fill="#ffffff"/>
<rect x="384" y="38" width="1" height="1" fill="#ffffff"/>
<rect x="390" y="38" width="1" height="1" fill="#ffffff"/>
<rect x="396" y="38" width="1" height="1" fill="#ffffff"/>
<rect x="402" y="38" width="1" height="1" fill="#ffffff"/>
<rect x="408" y="38" width="1" height="1" fill="#ffffff"/>
<rect x="414" y="38" width="1" height="1" fill="#ffffff"/>
<rect x="420" y="38" width="1" height="1" fill="#ffffff"/>
<rect x="426" y="38" width="1" height="1" fill="#ffffff"/>
<rect x="432" y="38" width="1" height="1" fill="#ffffff"/>
<rect x="438" y="38" width="1" height="1" fill="#ffffff"/>
<rect x="444" y="38" width="1" height="1" fill="#ffffff"/>
<rect x="450" y="38" width="1" height="1" fill="#ffffff"/>
<rect x="456" y="38" width="1" height="1" fill="#ffffff"/>
<rect x="462" y="38" width="1" height="1" fill="#ffffff"/>
<rect x="468" y="38" width="1" height="1" fill="#ffffff"/>
<rect x="474" y="38" width="1" height="1" fill="#ffffff"/>
<rect x="480" y="38" width="1" height="1" fill="#ffffff"/>
<rect x="486" y="38" width="1" height="1" fill="#ffffff"/>
<rect x="492" y="38" width="1" height="1" fill="#ffffff"/>
<rect x="498" y="38" width="1" height="1" fill="#ffffff"/>
<rect x="504" y="38" width="1" height="1" fill="#ffffff"/>
<rect x="510" y="38" width="1" height="1" fill="#ffffff"/>
<rect x="516" y="38" width="1" height="1" fill="#ffffff"/>
<rect x="522" y="38" width="1" height="1" fill="#ffffff"/>
<rect x="528" y="38" width="1" height="1" fill="#ffffff"/>
<rect x="534" y="38" width="1" height="1" fill="#ffffff"/>
<rect x="540" y="38" width="1" height="1" fill="#ffffff"/>
<rect x="546" y="38" width="1" height="1" fill="#ffffff"/>
<rect x="552" y="38" width="1" height="1" fill="#ffffff"/>
<rect x="558" y="38" width="1" height="1" fill="#ffffff"/>
<rect x="564" y="38" width="1" height="1" fill="#ffffff"/>
<rect x="570" y="38" width="1" height="1" fill="#ffffff"/>
<rect x="576" y="38" width="1" height="1" fill="#ffffff"/>
<rect x="582" y="38" width="1" height="1" fill="#ffffff"/>
<rect x="588" y="38" width="1" height="1" fill="#ffffff"/>
<rect x="594" y="38" width="1" height="1" fill="#ffffff"/>
<rect x="600" y="38" width="1" height="1" fill="#ffffff"/>
<rect x="606" y="38" width="1" height="1" fill="#ffffff"/>
<rect x="612" y="38" width="1" height="1" fill="#ffffff"/>
<rect x="618" y="38" width="1" height="1" fill="#ffffff"/>
<rect x="624" y="38" width="1" height="1" fill="#ffffff"/>
<rect x="630" y="38" width="1" height="1" fill="#ffffff"/>
<rect x="636" y="38" width="1" height="1" fill="#ffffff"/>
<rect x="642" y="38" width="1" height="1" fill="#ffffff"/>
<rect x="648" y="38" width="1" height="1" fill="#ffffff"/>
<rect x="654" y="38" width="1" height="1" fill="#ffffff"/>
<rect x="660" y="38" width="1" height="1" fill="#ffffff"/>
<rect x="666" y="38" width="1" height="1" fill="#ffffff"/>
<rect x="114" y="48" width="1" height="1" fill="#ffffff"/>
<rect x="120" y="48" width="1" height="1" fill="#ffffff"/>
<rect x="126" y="48" width="1" height="1" fill="#ffffff"/>
<rect x="132" y="48" width="1" height="1" fill="#ffffff"/>
<rect x="138" y="48" width="1" height="1" fill="#ffffff"/>
<rect x="144" y="48" width="1" height="1" fill="#ffffff"/>
<rect x="150" y="48" width="1" height="1" fill="#ffffff"/>
<rect x="156" y="48" width="1" height="1" fill="#ffffff"/>
<rect x="162" y="48" width="1" height="1" fill="#ffffff"/>
<rect x="168" y="48" width="1" height="1" fill="#ffffff"/>
<rect x="174" y="48" width="1" height="1" fill="#ffffff"/>
<rect x="180" y="48" width="1" height="1" fill="#ffffff"/>
<rect x="186" y="48" width="1" height="1" fill="#ffffff"/>
<rect x="192" y="48" width="1" height="1" fill="#ffffff"/>
<rect x="198" y="48" width="1" height="1" fill="#ffffff"/>
<rect x="204" y="48" width="1" height="1" fill="#ffffff"/>
<rect x="210" y="48" width="1" height="1" fill="#ffffff"/>
<rect x="216" y="48" width="1" height="1" fill="#ffffff"/>
<rect x="222" y="48" width="1" height="1" fill="#ffffff"/>
<rect x="228" y="48" width="1" height="1" fill="#ffffff"/>
<rect x="234" y="48" width="1" height="1" fill="#ffffff"/>
<rect x="240" y="48" width="1" height="1" fill="#ffffff"/>
<rect x="246" y="48" width="1" height="1" fill="#ffffff"/>
<rect x="252" y="48" width="1" height="1" fill="#ffffff"/>
<rect x="258" y="48" width="1" height="1" fill="#ffffff"/>
<rect x="264" y="48" width="1" height="1" fill="#ffffff"/>
<rect x="270" y="48" width="1" height="1" fill="#ffffff"/>
<rect x="276" y="48" width="1" height="1" fill="#ffffff"/>
<rect x="282" y="48" width="1" height="1" fill="#ffffff"/>
<rect x="288" y="48" width="1" height="1" fill="#ffffff"/>
<rect x="294" y="48" width="1" height="1" fill="#ffffff"/>
<rect x="300" y="48" width="1" height="1" fill="#ffffff"/>
<rect x="306" y="48" width="1" height="1" fill="#ffffff"/>
<rect x="312" y="48" width="1" height="1" fill="#ffffff"/>
<rect x="318" y="48" width="1" height="1" fill="#ffffff"/>
<rect x="324" y="48" width="1" height="1" fill="#ffffff"/>
<rect x="330" y="48" width="1" height="1" fill="#ffffff"/>
<rect x="336" y="48" width="1" height="1" fill="#ffffff"/>
<rect x="342" y="48" width="1" height="1" fill="#ffffff"/>
<rect x="348" y="48" width="1" height="1" fill="#ffffff"/>
<rect x="354" y="48" width="1" height="1" fill="#ffffff"/>
<rect x="360" y="48" width="1" height="1" fill="#ffffff"/>
<rect x="366" y="48" width="1" height="1" fill="#ffffff"/>
<rect x="372" y="48" width="1" height="1" fill="#ffffff"/>
<rect x="378" y="48" width="1" height="1" fill="#ffffff"/>
<rect x="384" y="48" width="1" height="1" fill="#ffffff"/>
<rect x="390" y="48" width="1" height="1" fill="#ffffff"/>
<rect x="396" y="48" width="1" height="1" fill="#ffffff"/>
<rect x="402" y="48" width="1" height="1" fill="#ffffff"/>
<rect x="408" y="48" width="1" height="1" fill="#ffffff"/>
<rect x="414" y="48" width="1" height="1" fill="#ffffff"/>
<rect x="420" y="48" width="1" height="1" fill="#ffffff"/>
<rect x="426" y="48" width="1" height="1" fill="#ffffff"/>
<rect x="432" y="48" width="1" height="1" fill="#ffffff"/>
<rect x="438" y="48" width="1" height="1" fill="#ffffff"/>
<rect x="444" y="48" width="1" height="1" fill="#ffffff"/>
<rect x="450" y="48" width="1" height="1" fill="#ffffff"/>
<rect x="456" y="48" width="1" height="1" fill="#ffffff"/>
<rect x="462" y="48" width="1" height="1" fill="#ffffff"/>
<rect x="468" y="48" width="1" height="1" fill="#ffffff"/>
<rect x="474" y="48" width="1" height="1" fill="#ffffff"/>
<rect x="480" y="48" width="1" height="1" fill="#ffffff"/>
<rect x="486" y="48" width="1" height="1" fill="#ffffff"/>
<rect x="492" y="48" width="1" height="1" fill="#ffffff"/>
<rect x="498" y="48" width="1" height="1" fill="#ffffff"/>
<rect x="504" y="48" width="1" height="1" fill="#ffffff"/>
<rect x="510" y="48" width="1" height="1" fill="#ffffff"/>
<rect x="516" y="48" width="1" height="1" fill="#ffffff"/>
<rect x="522" y="48" width="1" height="1" fill="#ffffff"/>
<rect x="528" y="48" width="1" height="1" fill="#ffffff"/>
<rect x="534" y="48" width="1" height="1" fill="#ffffff"/>
<rect x="540" y="48" width="1" height="1" fill="#ffffff"/>
<rect x="546" y="48" width="1" height="1" fill="#ffffff"/>
<rect x="552" y="48" width="1" height="1" fill="#ffffff"/>
<rect x="558" y="48" width="1" height="1" fill="#ffffff"/>
<rect x="564" y="48" width="1" height="1" fill="#ffffff"/>
<rect x="570" y="48" width="1" height="1" fill="#ffffff"/>
<rect x="576" y="48" width="1" height="1" fill="#ffffff"/>
<rect x="582" y="48" width="1" height="1" fill="#ffffff"/>
<rect x="588" y="48" width="1" height="1" fill="#ffffff"/>
<rect x="594" y="48" width="1" height="1" fill="#ffffff"/>
<rect x="600" y="48" width="1" height="1" fill="#ffffff"/>
<rect x="606" y="48" width="1" height="1" fill="#ffffff"/>
<rect x="612" y="48" width="1" height="1" fill="#ffffff"/>
<rect x="618" y="48" width="1" height="1" fill="#ffffff"/>
<rect x="624" y="48" width="1" height="1" fill="#ffffff"/>
<rect x="630" y="48" width="1" height="1" fill="#ffffff"/>
<rect x="636" y="48" width="1" height="1" fill="#ffffff"/>
<rect x="642" y="48" width="1" height="1" fill="#ffffff"/>
<rect x="648" y="48" width="1" height="1" fill="#ffffff"/>
<rect x="654" y="48" width="1" height="1" fill="#ffffff"/>
<rect x="660" y="48" width="1" height="1" fill="#ffffff"/>
<rect x="666" y="48" width="1" height="1" fill="#ffffff"/>
<rect x="114" y="57" width="1" height="1" fill="#ffffff"/>
<rect x="120" y="57" width="1" height="1" fill="#ffffff"/>
<rect x="126" y="57" width="1" height="1" fill="#ffffff"/>
<rect x="132" y="57" width="1" height="1" fill="#ffffff"/>
<rect x="138" y="57" width="1" height="1" fill="#ffffff"/>
<rect x="144" y="57" width="1" height="1" fill="#ffffff"/>
<rect x="150" y="57" width="1" height="1" fill="#ffffff"/>
<rect x="156" y="57" width="1" height="1" fill="#ffffff"/>
<rect x="162" y="57" width="1" height="1" fill="#ffffff"/>
<rect x="168" y="57" width="1" height="1" fill="#ffffff"/>
<rect x="174" y="57" width="1" height="1" fill="#ffffff"/>
<rect x="180" y="57" width="1" height="1" fill="#ffffff"/>
<rect x="186" y="57" width="1" height="1" fill="#ffffff"/>
<rect x="192" y="57" width="1" height="1" fill="#ffffff"/>
<rect x="198" y="57" width="1" height="1" fill="#ffffff"/>
<rect x="204" y="57" width="1" height="1" fill="#ffffff"/>
<rect x="210" y="57" width="1" height="1" fill="#ffffff"/>
<rect x="216" y="57" width="1" height="1" fill="#ffffff"/>
<rect x="222" y="57" width="1" height="1" fill="#ffffff"/>
<rect x="228" y="57" width="1" height="1" fill="#ffffff"/>
<rect x="234" y="57" width="1" height="1" fill="#ffffff"/>
<rect x="240" y="57" width="1" height="1" fill="#ffffff"/>
<rect x="246" y="57" width="1" height="1" fill="#ffffff"/>
<rect x="252" y="57" width="1" height="1" fill="#ffffff"/>
<rect x="258" y="57" width="1" height="1" fill="#ffffff"/>
<rect x="264" y="57" width="1" height="1" fill="#ffffff"/>
<rect x="270" y="57" width="1" height="1" fill="#ffffff"/>
<rect x="276" y="57" width="1" height="1" fill="#ffffff"/>
<rect x="282" y="57" width="1" height="1" fill="#ffffff"/>
<rect x="288" y="57" width="1" height="1" fill="#ffffff"/>
<rect x="294" y="57" width="1" height="1" fill="#ffffff"/>
<rect x="300" y="57" width="1" height="1" fill="#ffffff"/>
<rect x="306" y="57" width="1" height="1" fill="#ffffff"/>
<rect x="312" y="57" width="1" height="1" fill="#ffffff"/>
<rect x="318" y="57" width="1" height="1" fill="#ffffff"/>
<rect x="324" y="57" width="1" height="1" fill="#ffffff"/>
<rect x="330" y="57" width="1" height="1" fill="#ffffff"/>
<rect x="336" y="57" width="1" height="1" fill="#ffffff"/>
<rect x="342" y="57" width="1" height="1" fill="#ffffff"/>
<rect x="348" y="57" width="1" height="1" fill="#ffffff"/>
<rect x="354" y="57" width="1" height="1" fill="#ffffff"/>
<rect x="360" y="57" width="1" height="1" fill="#ffffff"/>
<rect x="366" y="57" width="1" height="1" fill="#ffffff"/>
<rect x="372" y="57" width="1" height="1" fill="#ffffff"/>
<rect x="378" y="57" width="1" height="1" fill="#ffffff"/>
<rect x="384" y="57" width="1" height="1" fill="#ffffff"/>
<rect x="390" y="57" width="1" height="1" fill="#ffffff"/>
<rect x="396" y="57" width="1" height="1" fill="#ffffff"/>
<rect x="402" y="57" width="1" height="1" fill="#ffffff"/>
<rect x="408" y="57" width="1" height="1" fill="#ffffff"/>
<rect x="414" y="57" width="1" height="1" fill="#ffffff"/>
<rect x="420" y="57" width="1" height="1" fill="#ffffff"/>
<rect x="426" y="57" width="1" height="1" fill="#ffffff"/>
<rect x="432" y="57" width="1" height="1" fill="#ffffff"/>
<rect x="438" y="57" width="1" height="1" fill="#ffffff"/>
<rect x="444" y="57" width="1" height="1" fill="#ffffff"/>
<rect x="450" y="57" width="1" height="1" fill="#ffffff"/>
<rect x="456" y="57" width="1" height="1" fill="#ffffff"/>
<rect x="462" y="57" width="1" height="1" fill="#ffffff"/>
<rect x="468" y="57" width="1" height="1" fill="#ffffff"/>
<rect x="474" y="57" width="1" height="1" fill="#ffffff"/>
<rect x="480" y="57" width="1" height="1" fill="#ffffff"/>
<rect x="486" y="57" width="1" height="1" fill="#ffffff"/>
<rect x="492" y="57" width="1" height="1" fill="#ffffff"/>
<rect x="498" y="57" width="1" height="1" fill="#ffffff"/>
<rect x="504" y="57" width="1" height="1" fill="#ffffff"/>
<rect x="510" y="57" width="1" height="1" fill="#ffffff"/>
<rect x="516" y="57" width="1" height="1" fill="#ffffff"/>
<rect x="522" y="57" width="1" height="1" fill="#ffffff"/>
<rect x="528" y="57" width="1" height="1" fill="#ffffff"/>
<rect x="534" y="57" width="1" height="1" fill="#ffffff"/>
<rect x="540" y="57" width="1" height="1" fill="#ffffff"/>
<rect x="546" y="57" width="1" height="1" fill="#ffffff"/>
<rect x="552" y="57" width="1" height="1" fill="#ffffff"/>
<rect x="558" y="57" width="1" height="1" fill="#ffffff"/>
<rect x="564" y="57" width="1" height="1" fill="#ffffff"/>
<rect x="570" y="57" width="1" height="1" fill="#ffffff"/>
<rect x="576" y="57" width="1" height="1" fill="#ffffff"/>
<rect x="582" y="57" width="1" height="1" fill="#ffffff"/>
<rect x="588" y="57" width="1" height="1" fill="#ffffff"/>
<rect x="594" y="57" width="1" height="1" fill="#ffffff"/>
<rect x="600" y="57" width="1" height="1" fill="#ffffff"/>
<rect x="606" y="57" width="1" height="1" fill="#ffffff"/>
<rect x="612" y="57" width="1" height="1" fill="#ffffff"/>
<rect x="618" y="57" width="1" height="1" fill="#ffffff"/>
<rect x="624" y="57" width="1" height="1" fill="#ffffff"/>
<rect x="630" y="57" width="1" height="1" fill="#ffffff"/>
<rect x="636" y="57" width="1" height="1" fill="#ffffff"/>
<rect x="642" y="57" width="1" height="1" fill="#ffffff"/>
<rect x="648" y="57" width="1" height="1" fill="#ffffff"/>
<rect x="654" y="57" width="1" height="1" fill="#ffffff"/>
<rect x="660" y="57" width="1" height="1" fill="#ffffff"/>
<rect x="666" y="57" width="1" height="1" fill="#ffffff"/>
<rect x="114" y="66" width="1" height="1" fill="#ffffff"/>
<rect x="120" y="66" width="1" height="1" fill="#ffffff"/>
<rect x="126" y="66" width="1" height="1" fill="#ffffff"/>
<rect x="132" y="66" width="1" height="1" fill="#ffffff"/>
<rect x="138" y="66" width="1" height="1" fill="#ffffff"/>
<rect x="144" y="66" width="1" height="1" fill="#ffffff"/>
<rect x="150" y="66" width="1" height="1" fill="#ffffff"/>
<rect x="156" y="66" width="1" height="1" fill="#ffffff"/>
<rect x="162" y="66" width="1" height="1" fill="#ffffff"/>
<rect x="168" y="66" width="1" height="1" fill="#ffffff"/>
<rect x="174" y="66" width="1" height="1" fill="#ffffff"/>
<rect x="180" y="66" width="1" height="1" fill="#ffffff"/>
<rect x="186" y="66" width="1" height="1" fill="#ffffff"/>
<rect x="192" y="66" width="1" height="1" fill="#ffffff"/>
<rect x="198" y="66" width="1" height="1" fill="#ffffff"/>
<rect x="204" y="66" width="1" height="1" fill="#ffffff"/>
<rect x="210" y="66" width="1" height="1" fill="#ffffff"/>
<rect x="216" y="66" width="1" height="1" fill="#ffffff"/>
<rect x="222" y="66" width="1" height="1" fill="#ffffff"/>
<rect x="228" y="66" width="1" height="1" fill="#ffffff"/>
<rect x="234" y="66" width="1" height="1" fill="#ffffff"/>
<rect x="240" y="66" width="1" height="1" fill="#ffffff"/>
<rect x="246" y="66" width="1" height="1" fill="#ffffff"/>
<rect x="252" y="66" width="1" height="1" fill="#ffffff"/>
<rect x="258" y="66" width="1" height="1" fill="#ffffff"/>
<rect x="264" y="66" width="1" height="1" fill="#ffffff"/>
<rect x="270" y="66" width="1" height="1" fill="#ffffff"/>
<rect x="276" y="66" width="1" height="1" fill="#ffffff"/>
<rect x="282" y="66" width="1" height="1" fill="#ffffff"/>
<rect x="288" y="66" width="1" height="1" fill="#ffffff"/>
<rect x="294" y="66" width="1" height="1" fill="#ffffff"/>
<rect x="300" y="66" width="1" height="1" fill="#ffffff"/>
<rect x="306" y="66" width="1" height="1" fill="#ffffff"/>
<rect x="312" y="66" width="1" height="1" fill="#ffffff"/>
<rect x="318" y="66" width="1" height="1" fill="#ffffff"/>
<rect x="324" y="66" width="1" height="1" fill="#ffffff"/>
<rect x="330" y="66" width="1" height="1" fill="#ffffff"/>
<rect x="336" y="66" width="1" height="1" fill="#ffffff"/>
<rect x="342" y="66" width="1" height="1" fill="#ffffff"/>
<rect x="348" y="66" width="1" height="1" fill="#ffffff"/>
<rect x="354" y="66" width="1" height="1" fill="#ffffff"/>
<rect x="360" y="66" width="1" height="1" fill="#ffffff"/>
<rect x="366" y="66" width="1" height="1" fill="#ffffff"/>
<rect x="372" y="66" width="1" height="1" fill="#ffffff"/>
<rect x="378" y="66" width="1" height="1" fill="#ffffff"/>
<rect x="384" y="66" width="1" height="1" fill="#ffffff"/>
<rect x="390" y="66" width="1" height="1" fill="#ffffff"/>
<rect x="396" y="66" width="1" height="1" fill="#ffffff"/>
<rect x="402" y="66" width="1" height="1" fill="#ffffff"/>
<rect x="408" y="66" width="1" height="1" fill="#ffffff"/>
<rect x="414" y="66" width="1" height="1" fill="#ffffff"/>
<rect x="420" y="66" width="1" height="1" fill="#ffffff"/>
<rect x="426" y="66" width="1" height="1" fill="#ffffff"/>
<rect x="432" y="66" width="1" height="1" fill="#ffffff"/>
<rect x="438" y="66" width="1" height="1" fill="#ffffff"/>
<rect x="444" y="66" width="1" height="1" fill="#ffffff"/>
<rect x="450" y="66" width="1" height="1" fill="#ffffff"/>
<rect x="456" y="66" width="1" height="1" fill="#ffffff"/>
<rect x="462" y="66" width="1" height="1" fill="#ffffff"/>
<rect x="468" y="66" width="1" height="1" fill="#ffffff"/>
<rect x="474" y="66" width="1" height="1" fill="#ffffff"/>
<rect x="480" y="66" width="1" height="1" fill="#ffffff"/>
<rect x="486" y="66" width="1" height="1" fill="#ffffff"/>
<rect x="492" y="66" width="1" height="1" fill="#ffffff"/>
<rect x="498" y="66" width="1" height="1" fill="#ffffff"/>
<rect x="504" y="66" width="1" height="1" fill="#ffffff"/>
<rect x="510" y="66" width="1" height="1" fill="#ffffff"/>
<rect x="516" y="66" width="1" height="1" fill="#ffffff"/>
<rect x="522" y="66" width="1" height="1" fill="#ffffff"/>
<rect x="528" y="66" width="1" height="1" fill="#ffffff"/>
<rect x="534" y="66" width="1" height="1" fill="#ffffff"/>
<rect x="540" y="66" width="1" height="1" fill="#ffffff"/>
<rect x="546" y="66" width="1" height="1" fill="#ffffff"/>
<rect x="552" y="66" width="1" height="1" fill="#ffffff"/>
<rect x="558" y="66" width="1" height="1" fill="#ffffff"/>
<rect x="564" y="66" width="1" height="1" fill="#ffffff"/>
<rect x="570" y="66" width="1" height="1" fill="#ffffff"/>
<rect x="576" y="66" width="1" height="1" fill="#ffffff"/>
<rect x="582" y="66" width="1" height="1" fill="#ffffff"/>
<rect x="588" y="66" width="1" height="1" fill="#ffffff"/>
<rect x="594" y="66" width="1" height="1" fill="#ffffff"/>
<rect x="600" y="66" width="1" height="1" fill="#ffffff"/>
<rect x="606" y="66" width="1" height="1" fill="#ffffff"/>
<rect x="612" y="66" width="1" height="1" fill="#ffffff"/>
<rect x="618" y="66" width="1" height="1" fill="#ffffff"/>
<rect x="624" y="66" width="1" height="1" fill="#ffffff"/>
<rect x="630" y="66" width="1" height="1" fill="#ffffff"/>
<rect x="636" y="66" width="1" height="1" fill="#ffffff"/>
<rect x="642" y="66" width="1" height="1" fill="#ffffff"/>
<rect x="648" y="66" width="1" height="1" fill="#ffffff"/>
<rect x="654" y="66" width="1" height="1" fill="#ffffff"/>
<rect x="660" y="66" width="1" height="1" fill="#ffffff"/>
<rect x="666" y="66" width="1" height="1" fill="#ffffff"/>
<rect x="108" y="69" width="564" height="8" fill="#ffffff"/>
<rect x="114" y="427" width="1" height="1" fill="#ffffff"/>
<rect x="120" y="427" width="1" height="1" fill="#ffffff"/>
<rect x="126" y="427" width="1" height="1" fill="#ffffff"/>
<rect x="132" y="427" width="1" height="1" fill="#ffffff"/>
<rect x="138" y="427" width="1" height="1" fill="#ffffff"/>
<rect x="144" y="427" width="1" height="1" fill="#ffffff"/>
<rect x="150" y="427" width="1" height="1" fill="#ffffff"/>
<rect x="156" y="427" width="1" height="1" fill="#ffffff"/>
<rect x="162" y="427" width="1" height="1" fill="#ffffff"/>
<rect x="168" y="427" width="1" height="1" fill="#ffffff"/>
<rect x="174" y="427" width="1" height="1" fill="#ffffff"/>
<rect x="180" y="427" width="1" height="1" fill="#ffffff"/>
<rect x="186" y="427" width="1" height="1" fill="#ffffff"/>
<rect x="192" y="427" width="1" height="1" fill="#ffffff"/>
<rect x="198" y="427" width="1" height="1" fill="#ffffff"/>
<rect x="204" y="427" width="1" height="1" fill="#ffffff"/>
<rect x="210" y="427" width="1" height="1" fill="#ffffff"/>
<rect x="216" y="427" width="1" height="1" fill="#ffffff"/>
<rect x="222" y="427" width="1" height="1" fill="#ffffff"/>
<rect x="228" y="427" width="1" height="1" fill="#ffffff"/>
<rect x="234" y="427" width="1" height="1" fill="#ffffff"/>
<rect x="240" y="427" width="1" height="1" fill="#ffffff"/>
<rect x="246" y="427" width="1" height="1" fill="#ffffff"/>
<rect x="252" y="427" width="1" height="1" fill="#ffffff"/>
<rect x="258" y="427" width="1" height="1" fill="#ffffff"/>
<rect x="264" y="427" width="1" height="1" fill="#ffffff"/>
<rect x="270" y="427" width="1" height="1" fill="#ffffff"/>
<rect x="276" y="427" width="1" height="1" fill="#ffffff"/>
<rect x="282" y="427" width="1" height="1" fill="#ffffff"/>
<rect x="288" y="427" width="1" height="1" fill="#ffffff"/>
<rect x="294" y="427" width="1" height="1" fill="#ffffff"/>
<rect x="300" y="427" width="1" height="1" fill="#ffffff"/>
<rect x="306" y="427" width="1" height="1" fill="#ffffff"/>
<rect x="312" y="427" width="1" height="1" fill="#ffffff"/>
<rect x="318" y="427" width="1" height="1" fill="#ffffff"/>
<rect x="324" y="427" width="1" height="1" fill="#ffffff"/>
<rect x="330" y="427" width="1" height="1" fill="#ffffff"/>
<rect x="336" y="427" width="1" height="1" fill="#ffffff"/>
<rect x="342" y="427" width="1" height="1" fill="#ffffff"/>
<rect x="348" y="427" width="1" height="1" fill="#ffffff"/>
<rect x="354" y="427" width="1" height="1" fill="#ffffff"/>
<rect x="360" y="427" width="1" height="1" fill="#ffffff"/>
<rect x="366" y="427" width="1" height="1" fill="#ffffff"/>
<rect x="372" y="427" width="1" height="1" fill="#ffffff"/>
<rect x="378" y="427" width="1" height="1" fill="#ffffff"/>
<rect x="384" y="427" width="1" height="1" fill="#ffffff"/>
<rect x="390" y="427" width="1" height="1" fill="#ffffff"/>
<rect x="396" y="427" width="1" height="1" fill="#ffffff"/>
<rect x="402" y="427" width="1" height="1" fill="#ffffff"/>
<rect x="408" y="427" width="1" height="1" fill="#ffffff"/>
<rect x="414" y="427" width="1" height="1" fill="#ffffff"/>
<rect x="420" y="427" width="1" height="1" fill="#ffffff"/>
<rect x="426" y="427" width="1" height="1" fill="#ffffff"/>
<rect x="432" y="427" width="1" height="1" fill="#ffffff"/>
<rect x="438" y="427" width="1" height="1" fill="#ffffff"/>
<rect x="444" y="427" width="1" height="1" fill="#ffffff"/>
<rect x="450" y="427" width="1" height="1" fill="#ffffff"/>
<rect x="456" y="427" width="1" height="1" fill="#ffffff"/>
<rect x="462" y="427" width="1" height="1" fill="#ffffff"/>
<rect x="468" y="427" width="1" height="1" fill="#ffffff"/>
<rect x="474" y="427" width="1" height="1" fill="#ffffff"/>
<rect x="480" y="427" width="1" height="1" fill="#ffffff"/>
<rect x="486" y="427" width="1" height="1" fill="#ffffff"/>
<rect x="492" y="427" width="1" height="1" fill="#ffffff"/>
<rect x="498" y="427" width="1" height="1" fill="#ffffff"/>
<rect x="504" y="427" width="1" height="1" fill="#ffffff"/>
<rect x="510" y="427" width="1" height="1" fill="#ffffff"/>
<rect x="516" y="427" width="1" height="1" fill="#ffffff"/>
<rect x="522" y="427" width="1" height="1" fill="#ffffff"/>
<rect x="528" y="427" width="1" height="1" fill="#ffffff"/>
<rect x="534" y="427" width="1" height="1" fill="#ffffff"/>
<rect x="540" y="427" width="1" height="1" fill="#ffffff"/>
<rect x="546" y="427" width="1" height="1" fill="#ffffff"/>
<rect x="552" y="427" width="1" height="1" fill="#ffffff"/>
<rect x="558" y="427" width="1" height="1" fill="#ffffff"/>
<rect x="564" y="427" width="1" height="1" fill="#ffffff"/>
<rect x="570" y="427" width="1" height="1" fill="#ffffff"/>
<rect x="576" y="427" width="1" height="1" fill="#ffffff"/>
<rect x="582" y="427" width="1" height="1" fill="#ffffff"/>
<rect x="588" y="427" width="1" height="1" fill="#ffffff"/>
<rect x="594" y="427" width="1" height="1" fill="#ffffff"/>
<rect x="600" y="427" width="1" height="1" fill="#ffffff"/>
<rect x="606" y="427" width="1" height="1" fill="#ffffff"/>
<rect x="612" y="427" width="1" height="1" fill="#ffffff"/>
<rect x="618" y="427" width="1" height="1" fill="#ffffff"/>
<rect x="624" y="427" width="1" height="1" fill="#ffffff"/>
<rect x="630" y="427" width="1" height="1" fill="#ffffff"/>
<rect x="636" y="427" width="1" height="1" fill="#ffffff"/>
<rect x="642" y="427" width="1" height="1" fill="#ffffff"/>
<rect x="648" y="427" width="1" height="1" fill="#ffffff"/>
<rect x="654" y="427" width="1" height="1" fill="#ffffff"/>
<rect x="660" y="427" width="1" height="1" fill="#ffffff"/>
<rect x="666" y="427" width="1" height="1" fill="#ffffff"/>
<rect x="114" y="439" width="1" height="1" fill="#ffffff"/>
<rect x="120" y="439" width="1" height="1" fill="#ffffff"/>
<rect x="126" y="439" width="1" height="1" fill="#ffffff"/>
<rect x="132" y="439" width="1" height="1" fill="#ffffff"/>
<rect x="138" y="439" width="1" height="1" fill="#ffffff"/>
<rect x="144" y="439" width="1" height="1" fill="#ffffff"/>
<rect x="150" y="439" width="1" height="1" fill="#ffffff"/>
<rect x="156" y="439" width="1" height="1" fill="#ffffff"/>
<rect x="162" y="439" width="1" height="1" fill="#ffffff"/>
<rect x="168" y="439" width="1" height="1" fill="#ffffff"/>
<rect x="174" y="439" width="1" height="1" fill="#ffffff"/>
<rect x="180" y="439" width="1" height="1" fill="#ffffff"/>
<rect x="186" y="439" width="1" height="1" fill="#ffffff"/>
<rect x="192" y="439" width="1" height="1" fill="#ffffff"/>
<rect x="198" y="439" width="1" height="1" fill="#ffffff"/>
<rect x="204" y="439" width="1" height="1" fill="#ffffff"/>
<rect x="210" y="439" width="1" height="1" fill="#ffffff"/>
<rect x="216" y="439" width="1" height="1" fill="#ffffff"/>
<rect x="222" y="439" width="1" height="1" fill="#ffffff"/>
<rect x="228" y="439" width="1" height="1" fill="#ffffff"/>
<rect x="234" y="439" width="1" height="1" fill="#ffffff"/>
<rect x="240" y="439" width="1" height="1" fill="#ffffff"/>
<rect x="246" y="439" width="1" height="1" fill="#ffffff"/>
<rect x="252" y="439" width="1" height="1" fill="#ffffff"/>
<rect x="258" y="439" width="1" height="1" fill="#ffffff"/>
<rect x="264" y="439" width="1" height="1" fill="#ffffff"/>
<rect x="270" y="439" width="1" height="1" fill="#ffffff"/>
<rect x="276" y="439" width="1" height="1" fill="#ffffff"/>
<rect x="282" y="439" width="1" height="1" fill="#ffffff"/>
<rect x="288" y="439" width="1" height="1" fill="#ffffff"/>
<rect x="294" y="439" width="1" height="1" fill="#ffffff"/>
<rect x="300" y="439" width="1" height="1" fill="#ffffff"/>
<rect x="306" y="439" width="1" height="1" fill="#ffffff"/>
<rect x="312" y="439" width="1" height="1" fill="#ffffff"/>
<rect x="318" y="439" width="1" height="1" fill="#ffffff"/>
<rect x="324" y="439" width="1" height="1" fill="#ffffff"/>
<rect x="330" y="439" width="1" height="1" fill="#ffffff"/>
<rect x="336" y="439" width="1" height="1" fill="#ffffff"/>
<rect x="342" y="439" width="1" height="1" fill="#ffffff"/>
<rect x="348" y="439" width="1" height="1" fill="#ffffff"/>
<rect x="354" y="439" width="1" height="1" fill="#ffffff"/>
<rect x="360" y="439" width="1" height="1" fill="#ffffff"/>
<rect x="366" y="439" width="1" height="1" fill="#ffffff"/>
<rect x="372" y="439" width="1" height="1" fill="#ffffff"/>
<rect x="378" y="439" width="1" height="1" fill="#ffffff"/>
<rect x="384" y="439" width="1" height="1" fill="#ffffff"/>
<rect x="390" y="439" width="1" height="1" fill="#ffffff"/>
<rect x="396" y="439" width="1" height="1" fill="#ffffff"/>
<rect x="402" y="439" width="1" height="1" fill="#ffffff"/>
<rect x="408" y="439" width="1" height="1" fill="#ffffff"/>
<rect x="414" y="439" width="1" height="1" fill="#ffffff"/>
<rect x="420" y="439" width="1" height="1" fill="#ffffff"/>
<rect x="426" y="439" width="1" height="1" fill="#ffffff"/>
<rect x="432" y="439" width="1" height="1" fill="#ffffff"/>
<rect x="438" y="439" width="1" height="1" fill="#ffffff"/>
<rect x="444" y="439" width="1" height="1" fill="#ffffff"/>
<rect x="450" y="439" width="1" height="1" fill="#ffffff"/>
<rect x="456" y="439" width="1" height="1" fill="#ffffff"/>
<rect x="462" y="439" width="1" height="1" fill="#ffffff"/>
<rect x="468" y="439" width="1" height="1" fill="#ffffff"/>
<rect x="474" y="439" width="1" height="1" fill="#ffffff"/>
<rect x="480" y="439" width="1" height="1" fill="#ffffff"/>
<rect x="486" y="439" width="1" height="1" fill="#ffffff"/>
<rect x="492" y="439" width="1" height="1" fill="#ffffff"/>
<rect x="498" y="439" width="1" height="1" fill="#ffffff"/>
<rect x="504" y="439" width="1" height="1" fill="#ffffff"/>
<rect x="510" y="439" width="1" height="1" fill="#ffffff"/>
<rect x="516" y="439" width="1" height="1" fill="#ffffff"/>
<rect x="522" y="439" width="1" height="1" fill="#ffffff"/>
<rect x="528" y="439" width="1" height="1" fill="#ffffff"/>
<rect x="534" y="439" width="1" height="1" fill="#ffffff"/>
<rect x="540" y="439" width="1" height="1" fill="#ffffff"/>
<rect x="546" y="439" width="1" height="1" fill="#ffffff"/>
<rect x="552" y="439" width="1" height="1" fill="#ffffff"/>
<rect x="558" y="439" width="1" height="1" fill="#ffffff"/>
<rect x="564" y="439" width="1" height="1" fill="#ffffff"/>
<rect x="570" y="439" width="1" height="1" fill="#ffffff"/>
<rect x="576" y="439" width="1" height="1" fill="#ffffff"/>
<rect x="582" y="439" width="1" height="1" fill="#ffffff"/>
<rect x="588" y="439" width="1" height="1" fill="#ffffff"/>
<rect x="594" y="439" width="1" height="1" fill="#ffffff"/>
<rect x="600" y="439" width="1" height="1" fill="#ffffff"/>
<rect x="606" y="439" width="1" height="1" fill="#ffffff"/>
<rect x="612" y="439" width="1" height="1" fill="#ffffff"/>
<rect x="618" y="439" width="1" height="1" fill="#ffffff"/>
<rect x="624" y="439" width="1" height="1" fill="#ffffff"/>
<rect x="630" y="439" width="1" height="1" fill="#ffffff"/>
<rect x="636" y="439" width="1" height="1" fill="#ffffff"/>
<rect x="642" y="439" width="1" height="1" fill="#ffffff"/>
<rect x="648" y="439" width="1" height="1" fill="#ffffff"/>
<rect x="654" y="439" width="1" height="1" fill="#ffffff"/>
<rect x="660" y="439" width="1" height="1" fill="#ffffff"/>
<rect x="666" y="439" width="1" height="1" fill="#ffffff"/>
<rect x="114" y="472" width="1" height="1" fill="#ffffff"/>
<rect x="120" y="472" width="1" height="1" fill="#ffffff"/>
<rect x="126" y="472" width="1" height="1" fill="#ffffff"/>
<rect x="132" y="472" width="1" height="1" fill="#ffffff"/>
<rect x="138" y="472" width="1" height="1" fill="#ffffff"/>
<rect x="144" y="472" width="1" height="1" fill="#ffffff"/>
<rect x="150" y="472" width="1" height="1" fill="#ffffff"/>
<rect x="156" y="472" width="1" height="1" fill="#ffffff"/>
<rect x="162" y="472" width="1" height="1" fill="#ffffff"/>
<rect x="168" y="472" width="1" height="1" fill="#ffffff"/>
<rect x="174" y="472" width="1" height="1" fill="#ffffff"/>
<rect x="180" y="472" width="1" height="1" fill="#ffffff"/>
<rect x="186" y="472" width="1" height="1" fill="#ffffff"/>
<rect x="192" y="472" width="1" height="1" fill="#ffffff"/>
<rect x="198" y="472" width="1" height="1" fill="#ffffff"/>
<rect x="204" y="472" width="1" height="1" fill="#ffffff"/>
<rect x="210" y="472" width="1" height="1" fill="#ffffff"/>
<rect x="216" y="472" width="1" height="1" fill="#ffffff"/>
<rect x="222" y="472" width="1" height="1" fill="#ffffff"/>
<rect x="228" y="472" width="1" height="1" fill="#ffffff"/>
<rect x="234" y="472" width="1" height="1" fill="#ffffff"/>
<rect x="240" y="472" width="1" height="1" fill="#ffffff"/>
<rect x="246" y="472" width="1" height="1" fill="#ffffff"/>
<rect x="252" y="472" width="1" height="1" fill="#ffffff"/>
<rect x="258" y="472" width="1" height="1" fill="#ffffff"/>
<rect x="264" y="472" width="1" height="1" fill="#ffffff"/>
<rect x="270" y="472" width="1" height="1" fill="#ffffff"/>
<rect x="276" y="472" width="1" height="1" fill="#ffffff"/>
<rect x="282" y="472" width="1" height="1" fill="#ffffff"/>
<rect x="288" y="472" width="1" height="1" fill="#ffffff"/>
<rect x="294" y="472" width="1" height="1" fill="#ffffff"/>
<rect x="300" y="472" width="1" height="1" fill="#ffffff"/>
<rect x="306" y="472" width="1" height="1" fill="#ffffff"/>
<rect x="312" y="472" width="1" height="1" fill="#ffffff"/>
<rect x="318" y="472" width="1" height="1" fill="#ffffff"/>
<rect x="324" y="472" width="1" height="1" fill="#ffffff"/>
<rect x="330" y="472" width="1" height="1" fill="#ffffff"/>
<rect x="336" y="472" width="1" height="1" fill="#ffffff"/>
<rect x="342" y="472" width="1" height="1" fill="#ffffff"/>
<rect x="348" y="472" width="1" height="1" fill="#ffffff"/>
<rect x="354" y="472" width="1" height="1" fill="#ffffff"/>
<rect x="360" y="472" width="1" height="1" fill="#ffffff"/>
<rect x="366" y="472" width="1" height="1" fill="#ffffff"/>
<rect x="372" y="472" width="1" height="1" fill="#ffffff"/>
<rect x="378" y="472" width="1" height="1" fill="#ffffff"/>
<rect x="384" y="472" width="1" height="1" fill="#ffffff"/>
<rect x="390" y="472" width="1" height="1" fill="#ffffff"/>
<rect x="396" y="472" width="1" height="1" fill="#ffffff"/>
<rect x="402" y="472" width="1" height="1" fill="#ffffff"/>
<rect x="408" y="472" width="1" height="1" fill="#ffffff"/>
<rect x="414" y="472" width="1" height="1" fill="#ffffff"/>
<rect x="420" y="472" width="1" height="1" fill="#ffffff"/>
<rect x="426" y="472" width="1" height="1" fill="#ffffff"/>
<rect x="432" y="472" width="1" height="1" fill="#ffffff"/>
<rect x="438" y="472" width="1" height="1" fill="#ffffff"/>
<rect x="444" y="472" width="1" height="1" fill="#ffffff"/>
<rect x="450" y="472" width="1" height="1" fill="#ffffff"/>
<rect x="456" y="472" width="1" height="1" fill="#ffffff"/>
<rect x="462" y="472" width="1" height="1" fill="#ffffff"/>
<rect x="468" y="472" width="1" height="1" fill="#ffffff"/>
<rect x="474" y="472" width="1" height="1" fill="#ffffff"/>
<rect x="480" y="472" width="1" height="1" fill="#ffffff"/>
<rect x="486" y="472" width="1" height="1" fill="#ffffff"/>
<rect x="492" y="472" width="1" height="1" fill="#ffffff"/>
<rect x="498" y="472" width="1" height="1" fill="#ffffff"/>
<rect x="504" y="472" width="1" height="1" fill="#ffffff"/>
<rect x="510" y="472" width="1" height="1" fill="#ffffff"/>
<rect x="516" y="472" width="1" height="1" fill="#ffffff"/>
<rect x="522" y="472" width="1" height="1" fill="#ffffff"/>
<rect x="528" y="472" width="1" height="1" fill="#ffffff"/>
<rect x="534" y="472" width="1" height="1" fill="#ffffff"/>
<rect x="540" y="472" width="1" height="1" fill="#ffffff"/>
<rect x="546" y="472" width="1" height="1" fill="#ffffff"/>
<rect x="552" y="472" width="1" height="1" fill="#ffffff"/>
<rect x="558" y="472" width="1" height="1" fill="#ffffff"/>
<rect x="564" y="472" width="1" height="1" fill="#ffffff"/>
<rect x="570" y="472" width="1" height="1" fill="#ffffff"/>
<rect x="576" y="472" width="1" height="1" fill="#ffffff"/>
<rect x="582" y="472" width="1" height="1" fill="#ffffff"/>
<rect x="588" y="472" width="1" height="1" fill="#ffffff"/>
<rect x="594" y="472" width="1" height="1" fill="#ffffff"/>
<rect x="600" y="472" width="1" height="1" fill="#ffffff"/>
<rect x="606" y="472" width="1" height="1" fill="#ffffff"/>
<rect x="612" y="472" width="1" height="1" fill="#ffffff"/>
<rect x="618" y="472" width="1" height="1" fill="#ffffff"/>
<rect x="624" y="472" width="1" height="1" fill="#ffffff"/>
<rect x="630" y="472" width="1" height="1" fill="#ffffff"/>
<rect x="636" y="472" width="1" height="1" fill="#ffffff"/>
<rect x="642" y="472" width="1" height="1" fill="#ffffff"/>
<rect x="648" y="472" width="1" height="1" fill="#ffffff"/>
<rect x="654" y="472" width="1" height="1" fill="#ffffff"/>
<rect x="660" y="472" width="1" height="1" fill="#ffffff"/>
<rect x="666" y="472" width="1" height="1" fill="#ffffff"/>
<rect x="108" y="478" width="5" height="6" fill="#ffffff"/>
<rect x="113" y="480" width="1" height="3" fill="#ffffff"/>
<rect x="114" y="480" width="1" height="3" fill="#ffffff"/>
<rect x="115" y="480" width="1" height="3" fill="#ffffff"/>
<rect x="116" y="481" width="1" height="2" fill="#ffffff"/>
<rect x="117" y="481" width="1" height="2" fill="#ffffff"/>
<rect x="118" y="481" width="1" height="2" fill="#ffffff"/>
<rect x="119" y="481" width="1" height="2" fill="#ffffff"/>
<rect x="120" y="481" width="1" height="2" fill="#ffffff"/>
<rect x="121" y="481" width="1" height="2" fill="#ffffff"/>
<rect x="122" y="481" width="1" height="2" fill="#ffffff"/>
<rect x="123" y="481" width="1" height="2" fill="#ffffff"/>
<rect x="124" y="480" width="1" height="3" fill="#ffffff"/>
<rect x="125" y="480" width="1" height="3" fill="#ffffff"/>
<rect x="126" y="480" width="1" height="3" fill="#ffffff"/>
<rect x="127" y="480" width="1" height="3" fill="#ffffff"/>
<rect x="128" y="480" width="1" height="3" fill="#ffffff"/>
<rect x="129" y="480" width="1" height="3" fill="#ffffff"/>
<rect x="130" y="480" width="1" height="3" fill="#ffffff"/>
<rect x="131" y="480" width="1" height="3" fill="#ffffff"/>
<rect x="132" y="480" width="1" height="3" fill="#ffffff"/>
<rect x="133" y="480" width="1" height="3" fill="#ffffff"/>
<rect x="134" y="479" width="1" height="4" fill="#ffffff"/>
<rect x="135" y="479" width="1" height="4" fill="#ffffff"/>
<rect x="136" y="479" width="1" height="4" fill="#ffffff"/>
<rect x="137" y="479" width="1" height="4" fill="#ffffff"/>
<rect x="138" y="480" width="1" height="3" fill="#ffffff"/>
<rect x="139" y="480" width="1" height="3" fill="#ffffff"/>
<rect x="140" y="480" width="1" height="3" fill="#ffffff"/>
<rect x="141" y="480" width="1" height="3" fill="#ffffff"/>
<rect x="142" y="480" width="1" height="3" fill="#ffffff"/>
<rect x="143" y="480" width="1" height="3" fill="#ffffff"/>
<rect x="144" y="480" width="1" height="3" fill="#ffffff"/>
<rect x="145" y="481" width="1" height="2" fill="#ffffff"/>
<rect x="146" y="481" width="1" height="2" fill="#ffffff"/>
<rect x="147" y="482" width="1" height="1" fill="#ffffff"/>
<rect x="148" y="482" width="1" height="1" fill="#ffffff"/>
<rect x="149" y="482" width="1" height="1" fill="#ffffff"/>
<rect x="150" y="482" width="1" height="1" fill="#ffffff"/>
<rect x="151" y="482" width="1" height="1" fill="#ffffff"/>
<rect x="152" y="482" width="1" height="1" fill="#ffffff"/>
<rect x="153" y="482" width="1" height="1" fill="#ffffff"/>
<rect x="154" y="482" width="1" height="1" fill="#ffffff"/>
<rect x="155" y="482" width="1" height="1" fill="#ffffff"/>
<rect x="156" y="482" width="1" height="1" fill="#ffffff"/>
<rect x="157" y="481" width="1" height="2" fill="#ffffff"/>
<rect x="158" y="480" width="1" height="3" fill="#ffffff"/>
<rect x="159" y="480" width="1" height="3" fill="#ffffff"/>
<rect x="160" y="481" width="1" height="2" fill="#ffffff"/>
<rect x="161" y="481" width="1" height="2" fill="#ffffff"/>
<rect x="162" y="480" width="1" height="3" fill="#ffffff"/>
<rect x="163" y="480" width="1" height="3" fill="#ffffff"/>
<rect x="164" y="480" width="1" height="3" fill="#ffffff"/>
<rect x="165" y="480" width="1" height="3" fill="#ffffff"/>
<rect x="166" y="480" width="1" height="3" fill="#ffffff"/>
<rect x="167" y="480" width="1" height="3" fill="#ffffff"/>
<rect x="168" y="480" width="1" height="3" fill="#ffffff"/>
<rect x="169" y="480" width="1" height="3" fill="#ffffff"/>
<rect x="170" y="480" width="1" height="3" fill="#ffffff"/>
<rect x="171" y="480" width="1" height="3" fill="#ffffff"/>
<rect x="172" y="480" width="1" height="3" fill="#ffffff"/>
<rect x="173" y="480" width="1" height="3" fill="#ffffff"/>
<rect x="174" y="480" width="1" height="3" fill="#ffffff"/>
<rect x="175" y="480" width="1" height="3" fill="#ffffff"/>
<rect x="176" y="480" width="1" height="3" fill="#ffffff"/>
<rect x="177" y="480" width="1" height="3" fill="#ffffff"/>
<rect x="178" y="480" width="1" height="3" fill="#ffffff"/>
<rect x="179" y="479" width="1" height="4" fill="#ffffff"/>
<rect x="180" y="479" width="1" height="4" fill="#ffffff"/>
<rect x="181" y="479" width="1" height="4" fill="#ffffff"/>
<rect x="182" y="479" width="1" height="4" fill="#ffffff"/>
<rect x="183" y="479" width="1" height="4" fill="#ffffff"/>
<rect x="184" y="479" width="1" height="4" fill="#ffffff"/>
<rect x="185" y="479" width="1" height="4" fill="#ffffff"/>
<rect x="186" y="480" width="1" height="3" fill="#ffffff"/>
<rect x="187" y="480" width="1" height="3" fill="#ffffff"/>
<rect x="188" y="481" width="1" height="2" fill="#ffffff"/>
<rect x="189" y="480" width="1" height="3" fill="#ffffff"/>
<rect x="190" y="480" width="1" height="3" fill="#ffffff"/>
<rect x="191" y="480" width="1" height="3" fill="#ffffff"/>
<rect x="192" y="480" width="1" height="3" fill="#ffffff"/>
<rect x="193" y="480" width="1" height="3" fill="#ffffff"/>
<rect x="194" y="480" width="1" height="3" fill="#ffffff"/>
<rect x="195" y="480" width="1" height="3" fill="#ffffff"/>
<rect x="196" y="480" width="1" height="3" fill="#ffffff"/>
<rect x="197" y="480" width="1" height="3" fill="#ffffff"/>
<rect x="198" y="480" width="1" height="3" fill="#ffffff"/>
<rect x="199" y="480" width="1" height="3" fill="#ffffff"/>
<rect x="200" y="480" width="1" height="3" fill="#ffffff"/>
<rect x="201" y="480" width="1" height="3" fill="#ffffff"/>
<rect x="202" y="480" width="1" height="3" fill="#ffffff"/>
<rect x="203" y="480" width="1" height="3" fill="#ffffff"/>
<rect x="204" y="480" width="1" height="3" fill="#ffffff"/>
<rect x="205" y="480" width="1" height="3" fill="#ffffff"/>
<rect x="206" y="480" width="1" height="3" fill="#ffffff"/>
<rect x="207" y="480" width="1" height="3" fill="#ffffff"/>
<rect x="208" y="480" width="1" height="3" fill="#ffffff"/>
<rect x="209" y="480" width="1" height="3" fill="#ffffff"/>
<rect x="210" y="481" width="1" height="2" fill="#ffffff"/>
<rect x="211" y="481" width="1" height="2" fill="#ffffff"/>
<rect x="212" y="481" width="1" height="2" fill="#ffffff"/>
<rect x="213" y="481" width="1" height="2" fill="#ffffff"/>
<rect x="214" y="481" width="1" height="2" fill="#ffffff"/>
<rect x="215" y="481" width="1" height="2" fill="#ffffff"/>
<rect x="216" y="481" width="1" height="2" fill="#ffffff"/>
<rect x="217" y="481" width="1" height="2" fill="#ffffff"/>
<rect x="218" y="481" width="1" height="2" fill="#ffffff"/>
<rect x="219" y="481" width="1" height="2" fill="#ffffff"/>
<rect x="220" y="481" width="1" height="2" fill="#ffffff"/>
<rect x="221" y="480" width="1" height="3" fill="#ffffff"/>
<rect x="222" y="480" width="1" height="3" fill="#ffffff"/>
<rect x="223" y="480" width="1" height="3" fill="#ffffff"/>
<rect x="224" y="480" width="1" height="3" fill="#ffffff"/>
<rect x="225" y="480" width="1" height="3" fill="#ffffff"/>
<rect x="226" y="480" width="1" height="3" fill="#ffffff"/>
<rect x="227" y="480" width="1" height="3" fill="#ffffff"/>
<rect x="228" y="479" width="1" height="4" fill="#ffffff"/>
<rect x="229" y="479" width="1" height="4" fill="#ffffff"/>
<rect x="230" y="479" width="1" height="4" fill="#ffffff"/>
<rect x="231" y="479" width="1" height="4" fill="#ffffff"/>
<rect x="232" y="479" width="1" height="4" fill="#ffffff"/>
<rect x="233" y="480" width="1" height="3" fill="#ffffff"/>
<rect x="234" y="479" width="1" height="4" fill="#ffffff"/>
<rect x="235" y="479" width="1" height="4" fill="#ffffff"/>
<rect x="236" y="479" width="1" height="4" fill="#ffffff"/>
<rect x="237" y="479" width="1" height="4" fill="#ffffff"/>
<rect x="238" y="480" width="1" height="3" fill="#ffffff"/>
<rect x="239" y="480" width="1" height="3" fill="#ffffff"/>
<rect x="240" y="480" width="1" height="3" fill="#ffffff"/>
<rect x="241" y="480" width="1" height="3" fill="#ffffff"/>
<rect x="242" y="480" width="1" height="3" fill="#ffffff"/>
<rect x="243" y="480" width="1" height="3" fill="#ffffff"/>
<rect x="244" y="481" width="1" height="2" fill="#ffffff"/>
<rect x="245" y="482" width="1" height="1" fill="#ffffff"/>
<rect x="246" y="482" width="1" height="1" fill="#ffffff"/>
<rect x="247" y="480" width="1" height="3" fill="#ffffff"/>
<rect x="248" y="480" width="1" height="3" fill="#ffffff"/>
<rect x="249" y="480" width="1" height="3" fill="#ffffff"/>
<rect x="250" y="480" width="1" height="3" fill="#ffffff"/>
<rect x="251" y="480" width="1" height="3" fill="#ffffff"/>
<rect x="252" y="480" width="1" height="3" fill="#ffffff"/>
<rect x="253" y="480" width="1" height="3" fill="#ffffff"/>
<rect x="254" y="480" width="1" height="3" fill="#ffffff"/>
<rect x="255" y="481" width="1" height="2" fill="#ffffff"/>
<rect x="256" y="481" width="1" height="2" fill="#ffffff"/>
<rect x="257" y="481" width="1" height="2" fill="#ffffff"/>
<rect x="258" y="480" width="1" height="3" fill="#ffffff"/>
<rect x="259" y="480" width="1" height="3" fill="#ffffff"/>
<rect x="260" y="480" width="1" height="3" fill="#ffffff"/>
<rect x="261" y="479" width="1" height="4" fill="#ffffff"/>
<rect x="262" y="480" width="1" height="3" fill="#ffffff"/>
<rect x="263" y="480" width="1" height="3" fill="#ffffff"/>
<rect x="264" y="481" width="1" height="2" fill="#ffffff"/>
<rect x="265" y="481" width="1" height="2" fill="#ffffff"/>
<rect x="266" y="481" width="1" height="2" fill="#ffffff"/>
<rect x="267" y="481" width="1" height="2" fill="#ffffff"/>
<rect x="268" y="481" width="1" height="2" fill="#ffffff"/>
<rect x="269" y="481" width="1" height="2" fill="#ffffff"/>
<rect x="270" y="481" width="1" height="2" fill="#ffffff"/>
<rect x="271" y="481" width="1" height="2" fill="#ffffff"/>
<rect x="272" y="481" width="1" height="2" fill="#ffffff"/>
<rect x="273" y="481" width="1" height="2" fill="#ffffff"/>
<rect x="274" y="481" width="1" height="2" fill="#ffffff"/>
<rect x="275" y="482" width="1" height="1" fill="#ffffff"/>
<rect x="276" y="482" width="1" height="1" fill="#ffffff"/>
<rect x="277" y="482" width="1" height="1" fill="#ffffff"/>
<rect x="278" y="480" width="1" height="3" fill="#ffffff"/>
<rect x="279" y="480" width="1" height="3" fill="#ffffff"/>
<rect x="280" y="480" width="1" height="3" fill="#ffffff"/>
<rect x="281" y="480" width="1" height="3" fill="#ffffff"/>
<rect x="282" y="480" width="1" height="3" fill="#ffffff"/>
<rect x="283" y="480" width="1" height="3" fill="#ffffff"/>
<rect x="284" y="480" width="1" height="3" fill="#ffffff"/>
<rect x="285" y="480" width="1" height="3" fill="#ffffff"/>
<rect x="286" y="481" width="1" height="2" fill="#ffffff"/>
<rect x="287" y="481" width="1" height="2" fill="#ffffff"/>
<rect x="288" y="481" width="1" height="2" fill="#ffffff"/>
<rect x="289" y="480" width="1" height="3" fill="#ffffff"/>
<rect x="290" y="480" width="1" height="3" fill="#ffffff"/>
<rect x="291" y="480" width="1" height="3" fill="#ffffff"/>
<rect x="292" y="479" width="1" height="4" fill="#ffffff"/>
<rect x="293" y="479" width="1" height="4" fill="#ffffff"/>
<rect x="294" y="479" width="1" height="4" fill="#ffffff"/>
<rect x="295" y="479" width="1" height="4" fill="#ffffff"/>
<rect x="296" y="479" width="1" height="4" fill="#ffffff"/>
<rect x="297" y="480" width="1" height="3" fill="#ffffff"/>
<rect x="298" y="481" width="1" height="2" fill="#ffffff"/>
<rect x="299" y="481" width="1" height="2" fill="#ffffff"/>
<rect x="300" y="481" width="1" height="2" fill="#ffffff"/>
<rect x="301" y="481" width="1" height="2" fill="#ffffff"/>
<rect x="302" y="481" width="1" height="2" fill="#ffffff"/>
<rect x="303" y="481" width="1" height="2" fill="#ffffff"/>
<rect x="304" y="481" width="1" height="2" fill="#ffffff"/>
<rect x="305" y="481" width="1" height="2" fill="#ffffff"/>
<rect x="306" y="481" width="1" height="2" fill="#ffffff"/>
<rect x="307" y="481" width="1" height="2" fill="#ffffff"/>
<rect x="308" y="481" width="1" height="2" fill="#ffffff"/>
<rect x="309" y="481" width="1" height="2" fill="#ffffff"/>
<rect x="310" y="480" width="1" height="3" fill="#ffffff"/>
<rect x="311" y="480" width="1" height="3" fill="#ffffff"/>
<rect x="312" y="480" width="1" height="3" fill="#ffffff"/>
<rect x="313" y="480" width="1" height="3" fill="#ffffff"/>
<rect x="314" y="479" width="1" height="4" fill="#ffffff"/>
<rect x="315" y="479" width="1" height="4" fill="#ffffff"/>
<rect x="316" y="479" width="1" height="4" fill="#ffffff"/>
<rect x="317" y="479" width="1" height="4" fill="#ffffff"/>
<rect x="318" y="479" width="1" height="4" fill="#ffffff"/>
<rect x="319" y="479" width="1" height="4" fill="#ffffff"/>
<rect x="320" y="480" width="1" height="3" fill="#ffffff"/>
<rect x="321" y="480" width="1" height="3" fill="#ffffff"/>
<rect x="322" y="479" width="1" height="4" fill="#ffffff"/>
<rect x="323" y="479" width="1" height="4" fill="#ffffff"/>
<rect x="324" y="480" width="1" height="3" fill="#ffffff"/>
<rect x="325" y="481" width="1" height="2" fill="#ffffff"/>
<rect x="326" y="481" width="1" height="2" fill="#ffffff"/>
<rect x="327" y="481" width="1" height="2" fill="#ffffff"/>
<rect x="328" y="481" width="1" height="2" fill="#ffffff"/>
<rect x="329" y="480" width="1" height="3" fill="#ffffff"/>
<rect x="330" y="480" width="1" height="3" fill="#ffffff"/>
<rect x="331" y="480" width="1" height="3" fill="#ffffff"/>
<rect x="332" y="480" width="1" height="3" fill="#ffffff"/>
<rect x="333" y="479" width="1" height="4" fill="#ffffff"/>
<rect x="334" y="480" width="1" height="3" fill="#ffffff"/>
<rect x="335" y="480" width="1" height="3" fill="#ffffff"/>
<rect x="336" y="480" width="1" height="3" fill="#ffffff"/>
<rect x="337" y="480" width="1" height="3" fill="#ffffff"/>
<rect x="338" y="480" width="1" height="3" fill="#ffffff"/>
<rect x="339" y="481" width="1" height="2" fill="#ffffff"/>
<rect x="340" y="481" width="1" height="2" fill="#ffffff"/>
<rect x="341" y="481" width="1" height="2" fill="#ffffff"/>
<rect x="342" y="481" width="1" height="2" fill="#ffffff"/>
<rect x="343" y="481" width="1" height="2" fill="#ffffff"/>
<rect x="344" y="480" width="1" height="3" fill="#ffffff"/>
<rect x="345" y="480" width="1" height="3" fill="#ffffff"/>
<rect x="346" y="481" width="1" height="2" fill="#ffffff"/>
<rect x="347" y="480" width="1" height="3" fill="#ffffff"/>
<rect x="348" y="480" width="1" height="3" fill="#ffffff"/>
<rect x="349" y="480" width="1" height="3" fill="#ffffff"/>
<rect x="350" y="480" width="1" height="3" fill="#ffffff"/>
<rect x="351" y="481" width="1" height="2" fill="#ffffff"/>
<rect x="352" y="481" width="1" height="2" fill="#ffffff"/>
<rect x="353" y="481" width="1" height="2" fill="#ffffff"/>
<rect x="354" y="482" width="1" height="1" fill="#ffffff"/>
<rect x="355" y="482" width="1" height="1" fill="#ffffff"/>
<rect x="356" y="482" width="1" height="1" fill="#ffffff"/>
<rect x="357" y="480" width="1" height="3" fill="#ffffff"/>
<rect x="358" y="480" width="1" height="3" fill="#ffffff"/>
<rect x="359" y="480" width="1" height="3" fill="#ffffff"/>
<rect x="360" y="480" width="1" height="3" fill="#ffffff"/>
<rect x="361" y="480" width="1" height="3" fill="#ffffff"/>
<rect x="362" y="480" width="1" height="3" fill="#ffffff"/>
<rect x="363" y="480" width="1" height="3" fill="#ffffff"/>
<rect x="364" y="480" width="1" height="3" fill="#ffffff"/>
<rect x="365" y="480" width="1" height="3" fill="#ffffff"/>
<rect x="366" y="480" width="1" height="3" fill="#ffffff"/>
<rect x="367" y="480" width="1" height="3" fill="#ffffff"/>
<rect x="368" y="480" width="1" height="3" fill="#ffffff"/>
<rect x="369" y="480" width="1" height="3" fill="#ffffff"/>
<rect x="370" y="480" width="1" height="3" fill="#ffffff"/>
<rect x="371" y="480" width="1" height="3" fill="#ffffff"/>
<rect x="372" y="480" width="1" height="3" fill="#ffffff"/>
<rect x="373" y="480" width="1" height="3" fill="#ffffff"/>
<rect x="374" y="480" width="1" height="3" fill="#ffffff"/>
<rect x="375" y="480" width="1" height="3" fill="#ffffff"/>
<rect x="376" y="480" width="1" height="3" fill="#ffffff"/>
<rect x="377" y="480" width="1" height="3" fill="#ffffff"/>
<rect x="378" y="480" width="1" height="3" fill="#ffffff"/>
<rect x="379" y="480" width="1" height="3" fill="#ffffff"/>
<rect x="380" y="480" width="1" height="3" fill="#ffffff"/>
<rect x="381" y="480" width="1" height="3" fill="#ffffff"/>
<rect x="382" y="479" width="1" height="4" fill="#ffffff"/>
<rect x="383" y="479" width="1" height="4" fill="#ffffff"/>
<rect x="384" y="479" width="1" height="4" fill="#ffffff"/>
<rect x="385" y="479" width="1" height="4" fill="#ffffff"/>
<rect x="386" y="479" width="1" height="4" fill="#ffffff"/>
<rect x="387" y="480" width="1" height="3" fill="#ffffff"/>
<rect x="388" y="480" width="1" height="3" fill="#ffffff"/>
<rect x="389" y="480" width="1" height="3" fill="#ffffff"/>
<rect x="390" y="480" width="1" height="3" fill="#ffffff"/>
<rect x="391" y="480" width="1" height="3" fill="#ffffff"/>
<rect x="392" y="480" width="1" height="3" fill="#ffffff"/>
<rect x="393" y="480" width="1" height="3" fill="#ffffff"/>
<rect x="394" y="480" width="1" height="3" fill="#ffffff"/>
<rect x="395" y="481" width="1" height="2" fill="#ffffff"/>
<rect x="396" y="481" width="1" height="2" fill="#ffffff"/>
<rect x="397" y="481" width="1" height="2" fill="#ffffff"/>
<rect x="398" y="481" width="1" height="2" fill="#ffffff"/>
<rect x="399" y="481" width="1" height="2" fill="#ffffff"/>
<rect x="400" y="480" width="1" height="3" fill="#ffffff"/>
<rect x="401" y="480" width="1" height="3" fill="#ffffff"/>
<rect x="402" y="480" width="1" height="3" fill="#ffffff"/>
<rect x="403" y="481" width="1" height="2" fill="#ffffff"/>
<rect x="404" y="481" width="1" height="2" fill="#ffffff"/>
<rect x="405" y="480" width="1" height="3" fill="#ffffff"/>
<rect x="406" y="481" width="1" height="2" fill="#ffffff"/>
<rect x="407" y="481" width="1" height="2" fill="#ffffff"/>
<rect x="408" y="481" width="1" height="2" fill="#ffffff"/>
<rect x="409" y="481" width="1" height="2" fill="#ffffff"/>
<rect x="410" y="480" width="1" height="3" fill="#ffffff"/>
<rect x="411" y="480" width="1" height="3" fill="#ffffff"/>
<rect x="412" y="480" width="1" height="3" fill="#ffffff"/>
<rect x="413" y="480" width="1" height="3" fill="#ffffff"/>
<rect x="414" y="480" width="1" height="3" fill="#ffffff"/>
<rect x="415" y="481" width="1" height="2" fill="#ffffff"/>
<rect x="416" y="481" width="1" height="2" fill="#ffffff"/>
<rect x="417" y="481" width="1" height="2" fill="#ffffff"/>
<rect x="418" y="480" width="1" height="3" fill="#ffffff"/>
<rect x="419" y="480" width="1" height="3" fill="#ffffff"/>
<rect x="420" y="481" width="1" height="2" fill="#ffffff"/>
<rect x="421" y="481" width="1" height="2" fill="#ffffff"/>
<rect x="422" y="480" width="1" height="3" fill="#ffffff"/>
<rect x="423" y="480" width="1" height="3" fill="#ffffff"/>
<rect x="424" y="480" width="1" height="3" fill="#ffffff"/>
<rect x="425" y="480" width="1" height="3" fill="#ffffff"/>
<rect x="426" y="480" width="1" height="3" fill="#ffffff"/>
<rect x="427" y="480" width="1" height="3" fill="#ffffff"/>
<rect x="428" y="480" width="1" height="3" fill="#ffffff"/>
<rect x="429" y="480" width="1" height="3" fill="#ffffff"/>
<rect x="430" y="480" width="1" height="3" fill="#ffffff"/>
<rect x="431" y="480" width="1" height="3" fill="#ffffff"/>
<rect x="432" y="480" width="1" height="3" fill="#ffffff"/>
<rect x="433" y="480" width="1" height="3" fill="#ffffff"/>
<rect x="434" y="480" width="1" height="3" fill="#ffffff"/>
<rect x="435" y="480" width="1" height="3" fill="#ffffff"/>
<rect x="436" y="480" width="1" height="3" fill="#ffffff"/>
<rect x="437" y="480" width="1" height="3" fill="#ffffff"/>
<rect x="438" y="480" width="1" height="3" fill="#ffffff"/>
<rect x="439" y="480" width="1" height="3" fill="#ffffff"/>
<rect x="440" y="481" width="1" height="2" fill="#ffffff"/>
<rect x="441" y="482" width="1" height="1" fill="#ffffff"/>
<rect x="442" y="480" width="1" height="3" fill="#ffffff"/>
<rect x="443" y="480" width="1" height="3" fill="#ffffff"/>
<rect x="115" y="478" width="1" height="2" fill="#ffffff"/>
<rect x="118" y="477" width="1" height="4" fill="#ffffff"/>
<rect x="121" y="476" width="1" height="5" fill="#ffffff"/>
<rect x="125" y="477" width="1" height="3" fill="#ffffff"/>
<rect x="128" y="476" width="1" height="4" fill="#ffffff"/>
<rect x="131" y="478" width="1" height="2" fill="#ffffff"/>
<rect x="135" y="478" width="1" height="1" fill="#ffffff"/>
<rect x="138" y="477" width="1" height="3" fill="#ffffff"/>
<rect x="141" y="478" width="1" height="2" fill="#ffffff"/>
<rect x="145" y="476" width="1" height="5" fill="#ffffff"/>
<rect x="148" y="477" width="1" height="5" fill="#ffffff"/>
<rect x="152" y="476" width="1" height="6" fill="#ffffff"/>
<rect x="155" y="477" width="1" height="5" fill="#ffffff"/>
<rect x="158" y="476" width="1" height="4" fill="#ffffff"/>
<rect x="162" y="477" width="1" height="3" fill="#ffffff"/>
<rect x="165" y="476" width="1" height="4" fill="#ffffff"/>
<rect x="168" y="476" width="1" height="4" fill="#ffffff"/>
<rect x="172" y="477" width="1" height="3" fill="#ffffff"/>
<rect x="175" y="476" width="1" height="4" fill="#ffffff"/>
<rect x="178" y="477" width="1" height="3" fill="#ffffff"/>
<rect x="182" y="477" width="1" height="2" fill="#ffffff"/>
<rect x="185" y="477" width="1" height="2" fill="#ffffff"/>
<rect x="188" y="477" width="1" height="4" fill="#ffffff"/>
<rect x="192" y="478" width="1" height="2" fill="#ffffff"/>
<rect x="195" y="477" width="1" height="3" fill="#ffffff"/>
<rect x="199" y="477" width="1" height="3" fill="#ffffff"/>
<rect x="202" y="477" width="1" height="3" fill="#ffffff"/>
<rect x="205" y="477" width="1" height="3" fill="#ffffff"/>
<rect x="209" y="477" width="1" height="3" fill="#ffffff"/>
<rect x="212" y="477" width="1" height="4" fill="#ffffff"/>
<rect x="215" y="477" width="1" height="4" fill="#ffffff"/>
<rect x="219" y="477" width="1" height="4" fill="#ffffff"/>
<rect x="222" y="477" width="1" height="3" fill="#ffffff"/>
<rect x="225" y="478" width="1" height="2" fill="#ffffff"/>
<rect x="229" y="476" width="1" height="3" fill="#ffffff"/>
<rect x="232" y="478" width="1" height="1" fill="#ffffff"/>
<rect x="236" y="476" width="1" height="3" fill="#ffffff"/>
<rect x="239" y="477" width="1" height="3" fill="#ffffff"/>
<rect x="242" y="477" width="1" height="3" fill="#ffffff"/>
<rect x="246" y="476" width="1" height="6" fill="#ffffff"/>
<rect x="249" y="477" width="1" height="3" fill="#ffffff"/>
<rect x="252" y="476" width="1" height="4" fill="#ffffff"/>
<rect x="256" y="477" width="1" height="4" fill="#ffffff"/>
<rect x="259" y="478" width="1" height="2" fill="#ffffff"/>
<rect x="262" y="476" width="1" height="4" fill="#ffffff"/>
<rect x="266" y="478" width="1" height="3" fill="#ffffff"/>
<rect x="269" y="477" width="1" height="4" fill="#ffffff"/>
<rect x="272" y="476" width="1" height="5" fill="#ffffff"/>
<rect x="276" y="476" width="1" height="6" fill="#ffffff"/>
<rect x="279" y="477" width="1" height="3" fill="#ffffff"/>
<rect x="283" y="477" width="1" height="3" fill="#ffffff"/>
<rect x="286" y="477" width="1" height="4" fill="#ffffff"/>
<rect x="289" y="477" width="1" height="3" fill="#ffffff"/>
<rect x="293" y="477" width="1" height="2" fill="#ffffff"/>
<rect x="296" y="477" width="1" height="2" fill="#ffffff"/>
<rect x="299" y="477" width="1" height="4" fill="#ffffff"/>
<rect x="303" y="477" width="1" height="4" fill="#ffffff"/>
<rect x="306" y="477" width="1" height="4" fill="#ffffff"/>
<rect x="309" y="477" width="1" height="4" fill="#ffffff"/>
<rect x="313" y="477" width="1" height="3" fill="#ffffff"/>
<rect x="316" y="478" width="1" height="1" fill="#ffffff"/>
<rect x="320" y="477" width="1" height="3" fill="#ffffff"/>
<rect x="323" y="477" width="1" height="2" fill="#ffffff"/>
<rect x="326" y="476" width="1" height="5" fill="#ffffff"/>
<rect x="330" y="477" width="1" height="3" fill="#ffffff"/>
<rect x="333" y="477" width="1" height="2" fill="#ffffff"/>
<rect x="336" y="476" width="1" height="4" fill="#ffffff"/>
<rect x="340" y="477" width="1" height="4" fill="#ffffff"/>
<rect x="343" y="477" width="1" height="4" fill="#ffffff"/>
<rect x="346" y="477" width="1" height="4" fill="#ffffff"/>
<rect x="350" y="476" width="1" height="4" fill="#ffffff"/>
<rect x="353" y="477" width="1" height="4" fill="#ffffff"/>
<rect x="356" y="476" width="1" height="6" fill="#ffffff"/>
<rect x="360" y="478" width="1" height="2" fill="#ffffff"/>
<rect x="363" y="477" width="1" height="3" fill="#ffffff"/>
<rect x="367" y="476" width="1" height="4" fill="#ffffff"/>
<rect x="370" y="477" width="1" height="3" fill="#ffffff"/>
<rect x="373" y="476" width="1" height="4" fill="#ffffff"/>
<rect x="377" y="477" width="1" height="3" fill="#ffffff"/>
<rect x="380" y="477" width="1" height="3" fill="#ffffff"/>
<rect x="383" y="477" width="1" height="2" fill="#ffffff"/>
<rect x="387" y="477" width="1" height="3" fill="#ffffff"/>
<rect x="390" y="478" width="1" height="2" fill="#ffffff"/>
<rect x="393" y="477" width="1" height="3" fill="#ffffff"/>
<rect x="397" y="478" width="1" height="3" fill="#ffffff"/>
<rect x="400" y="477" width="1" height="3" fill="#ffffff"/>
<rect x="404" y="478" width="1" height="3" fill="#ffffff"/>
<rect x="407" y="478" width="1" height="3" fill="#ffffff"/>
<rect x="410" y="477" width="1" height="3" fill="#ffffff"/>
<rect x="414" y="477" width="1" height="3" fill="#ffffff"/>
<rect x="417" y="477" width="1" height="4" fill="#ffffff"/>
<rect x="420" y="477" width="1" height="4" fill="#ffffff"/>
<rect x="424" y="477" width="1" height="3" fill="#ffffff"/>
<rect x="427" y="477" width="1" height="3" fill="#ffffff"/>
<rect x="430" y="477" width="1" height="3" fill="#ffffff"/>
<rect x="434" y="478" width="1" height="2" fill="#ffffff"/>
<rect x="437" y="478" width="1" height="2" fill="#ffffff"/>
<rect x="440" y="477" width="1" height="4" fill="#ffffff"/>
<rect x="186" y="477" width="1" height="3" fill="#ffffff"/>
<rect x="187" y="477" width="1" height="3" fill="#ffffff"/>
<rect x="188" y="477" width="1" height="4" fill="#ffffff"/>
<rect x="189" y="477" width="1" height="3" fill="#ffffff"/>
<rect x="204" y="477" width="1" height="3" fill="#ffffff"/>
<rect x="205" y="477" width="1" height="3" fill="#ffffff"/>
<rect x="206" y="476" width="1" height="4" fill="#ffffff"/>
<rect x="207" y="476" width="1" height="4" fill="#ffffff"/>
<rect x="208" y="476" width="1" height="4" fill="#ffffff"/>
<rect x="209" y="476" width="1" height="4" fill="#ffffff"/>
<rect x="364" y="478" width="1" height="2" fill="#ffffff"/>
<rect x="365" y="478" width="1" height="2" fill="#ffffff"/>
<rect x="366" y="478" width="1" height="2" fill="#ffffff"/>
<rect x="367" y="478" width="1" height="2" fill="#ffffff"/>
<rect x="368" y="479" width="1" height="1" fill="#ffffff"/>
<rect x="387" y="479" width="1" height="1" fill="#ffffff"/>
<rect x="388" y="478" width="1" height="2" fill="#ffffff"/>
<rect x="389" y="478" width="1" height="2" fill="#ffffff"/>
<rect x="390" y="479" width="1" height="1" fill="#ffffff"/>
<rect x="377" y="474" width="1" height="6" fill="#ffffff"/>
<rect x="209" y="474" width="1" height="6" fill="#ffffff"/>
<rect x="108" y="19" width="564" height="1" fill="#ffffff"/>
<rect x="108" y="19" width="1" height="465" fill="#ffffff"/>
<rect x="671" y="19" width="1" height="465" fill="#ffffff"/>
<rect x="109" y="19" width="1" height="6" fill="#ffffff"/>
<rect x="109" y="479" width="1" height="4" fill="#ffffff"/>
<rect x="142" y="19" width="1" height="6" fill="#ffffff"/>
<rect x="142" y="479" width="1" height="4" fill="#ffffff"/>
<rect x="176" y="19" width="1" height="6" fill="#ffffff"/>
<rect x="176" y="479" width="1" height="4" fill="#ffffff"/>
<rect x="209" y="19" width="1" height="11" fill="#ffffff"/>
<rect x="209" y="474" width="1" height="9" fill="#ffffff"/>
<rect x="243" y="19" width="1" height="6" fill="#ffffff"/>
<rect x="243" y="479" width="1" height="4" fill="#ffffff"/>
<rect x="276" y="19" width="1" height="6" fill="#ffffff"/>
<rect x="276" y="479" width="1" height="4" fill="#ffffff"/>
<rect x="310" y="19" width="1" height="6" fill="#ffffff"/>
<rect x="310" y="479" width="1" height="4" fill="#ffffff"/>
<rect x="344" y="19" width="1" height="6" fill="#ffffff"/>
<rect x="344" y="479" width="1" height="4" fill="#ffffff"/>
<rect x="377" y="19" width="1" height="11" fill="#ffffff"/>
<rect x="377" y="474" width="1" height="9" fill="#ffffff"/>
<rect x="411" y="19" width="1" height="6" fill="#ffffff"/>
<rect x="411" y="479" width="1" height="4" fill="#ffffff"/>
<rect x="444" y="19" width="1" height="6" fill="#ffffff"/>
<rect x="444" y="479" width="1" height="4" fill="#ffffff"/>
<rect x="478" y="19" width="1" height="6" fill="#ffffff"/>
<rect x="478" y="479" width="1" height="4" fill="#ffffff"/>
<rect x="511" y="19" width="1" height="6" fill="#ffffff"/>
<rect x="511" y="479" width="1" height="4" fill="#ffffff"/>
<rect x="545" y="19" width="1" height="11" fill="#ffffff"/>
<rect x="545" y="474" width="1" height="9" fill="#ffffff"/>
<rect x="578" y="19" width="1" height="6" fill="#ffffff"/>
<rect x="578" y="479" width="1" height="4" fill="#ffffff"/>
<rect x="612" y="19" width="1" height="6" fill="#ffffff"/>
<rect x="612" y="479" width="1" height="4" fill="#ffffff"/>
<rect x="645" y="19" width="1" height="6" fill="#ffffff"/>
<rect x="645" y="479" width="1" height="4" fill="#ffffff"/>
<rect x="113" y="483" width="559" height="1" fill="#ff0000"/>
<rect x="126" y="483" width="1" height="1" fill="#ffffff"/>
<rect x="146" y="483" width="1" height="1" fill="#ffffff"/>
<rect x="166" y="483" width="1" height="1" fill="#ffffff"/>
<rect x="186" y="483" width="1" height="1" fill="#ffffff"/>
<rect x="206" y="483" width="1" height="1" fill="#ffffff"/>
<rect x="226" y="483" width="1" height="1" fill="#ffffff"/>
<rect x="246" y="483" width="1" height="1" fill="#ffffff"/>
<rect x="266" y="483" width="1" height="1" fill="#ffffff"/>
<rect x="287" y="483" width="1" height="1" fill="#ffffff"/>
<rect x="307" y="483" width="1" height="1" fill="#ffffff"/>
<rect x="327" y="483" width="1" height="1" fill="#ffffff"/>
<rect x="347" y="483" width="1" height="1" fill="#ffffff"/>
<rect x="367" y="483" width="1" height="1" fill="#ffffff"/>
<rect x="387" y="483" width="1" height="1" fill="#ffffff"/>
<rect x="407" y="483" width="1" height="1" fill="#ffffff"/>
<rect x="427" y="483" width="1" height="1" fill="#ffffff"/>
<rect x="120" y="483" width="1" height="1" fill="#ffffff"/>
<rect x="125" y="483" width="2" height="1" fill="#ffffff"/>
<rect x="132" y="483" width="1" height="1" fill="#ffffff"/>
<rect x="138" y="483" width="1" height="1" fill="#ffffff"/>
<rect x="142" y="483" width="1" height="1" fill="#ffffff"/>
<rect x="146" y="483" width="1" height="1" fill="#ffffff"/>
<rect x="152" y="483" width="1" height="1" fill="#ffffff"/>
<rect x="158" y="483" width="2" height="1" fill="#ffffff"/>
<rect x="162" y="483" width="2" height="1" fill="#ffffff"/>
<rect x="167" y="483" width="1" height="1" fill="#ffffff"/>
<rect x="172" y="483" width="1" height="1" fill="#ffffff"/>
<rect x="177" y="483" width="1" height="1" fill="#ffffff"/>
<rect x="183" y="483" width="1" height="1" fill="#ffffff"/>
<rect x="187" y="483" width="1" height="1" fill="#ffffff"/>
<rect x="194" y="483" width="2" height="1" fill="#ffffff"/>
<rect x="200" y="483" width="1" height="1" fill="#ffffff"/>
<rect x="205" y="483" width="1" height="1" fill="#ffffff"/>
<rect x="209" y="483" width="1" height="1" fill="#ffffff"/>
<rect x="214" y="483" width="1" height="1" fill="#ffffff"/>
<rect x="219" y="483" width="1" height="1" fill="#ffffff"/>
<rect x="224" y="483" width="1" height="1" fill="#ffffff"/>
<rect x="231" y="483" width="2" height="1" fill="#ffffff"/>
<rect x="236" y="483" width="1" height="1" fill="#ffffff"/>
<rect x="241" y="483" width="1" height="1" fill="#ffffff"/>
<rect x="246" y="483" width="1" height="1" fill="#ffffff"/>
<rect x="251" y="483" width="1" height="1" fill="#ffffff"/>
<rect x="256" y="483" width="1" height="1" fill="#ffffff"/>
<rect x="261" y="483" width="1" height="1" fill="#ffffff"/>
<rect x="266" y="483" width="1" height="1" fill="#ffffff"/>
<rect x="273" y="483" width="2" height="1" fill="#ffffff"/>
<rect x="277" y="483" width="2" height="1" fill="#ffffff"/>
<rect x="282" y="483" width="1" height="1" fill="#ffffff"/>
<rect x="287" y="483" width="1" height="1" fill="#ffffff"/>
<rect x="292" y="483" width="1" height="1" fill="#ffffff"/>
<rect x="297" y="483" width="1" height="1" fill="#ffffff"/>
<rect x="303" y="483" width="1" height="1" fill="#ffffff"/>
<rect x="308" y="483" width="1" height="1" fill="#ffffff"/>
<rect x="313" y="483" width="1" height="1" fill="#ffffff"/>
<rect x="318" y="483" width="1" height="1" fill="#ffffff"/>
<rect x="322" y="483" width="2" height="1" fill="#ffffff"/>
<rect x="328" y="483" width="1" height="1" fill="#ffffff"/>
<rect x="334" y="483" width="2" height="1" fill="#ffffff"/>
<rect x="338" y="483" width="1" height="1" fill="#ffffff"/>
<rect x="342" y="483" width="2" height="1" fill="#ffffff"/>
<rect x="347" y="483" width="2" height="1" fill="#ffffff"/>
<rect x="352" y="483" width="1" height="1" fill="#ffffff"/>
<rect x="357" y="483" width="1" height="1" fill="#ffffff"/>
<rect x="362" y="483" width="2" height="1" fill="#ffffff"/>
<rect x="367" y="483" width="2" height="1" fill="#ffffff"/>
<rect x="372" y="483" width="1" height="1" fill="#ffffff"/>
<rect x="376" y="483" width="2" height="1" fill="#ffffff"/>
<rect x="381" y="483" width="1" height="1" fill="#ffffff"/>
<rect x="385" y="483" width="1" height="1" fill="#ffffff"/>
<rect x="389" y="483" width="1" height="1" fill="#ffffff"/>
<rect x="394" y="483" width="2" height="1" fill="#ffffff"/>
<rect x="401" y="483" width="1" height="1" fill="#ffffff"/>
<rect x="406" y="483" width="1" height="1" fill="#ffffff"/>
<rect x="411" y="483" width="2" height="1" fill="#ffffff"/>
<rect x="418" y="483" width="1" height="1" fill="#ffffff"/>
<rect x="423" y="483" width="2" height="1" fill="#ffffff"/>
<rect x="428" y="483" width="1" height="1" fill="#ffffff"/>
<rect x="433" y="483" width="1" height="1" fill="#ffffff"/>
<rect x="438" y="483" width="2" height="1" fill="#ffffff"/>
<rect x="443" y="483" width="1" height="1" fill="#ffffff"/>
<g>
<path d="M195.5 6.5L194.5 6.5L193.5 7.5L193.5 9.5L193.5 10.5L193.5 12.5L194.5 13.5L195.5 13.5L196.5 13.5L197.5 13.5L198.5 12.5L198.5 10.5L198.5 9.5L198.5 7.5L197.5 6.5L196.5 6.5L195.5 6.5M201.5 8.5L201.5 7.5L202.5 7.5L202.5 6.5L203.5 6.5L204.5 6.5L205.5 6.5L205.5 7.5L206.5 7.5L206.5 8.5L205.5 9.5L205.5 10.5L201.5 13.5L206.5 13.5M210.5 8.5L210.5 9.5M210.5 13.5L210.5 13.5M214.5 6.5L213.5 6.5L212.5 7.5L212.5 9.5L212.5 10.5L212.5 12.5L213.5 13.5L214.5 13.5L215.5 13.5L216.5 13.5L217.5 12.5L217.5 10.5L217.5 9.5L217.5 7.5L216.5 6.5L215.5 6.5L214.5 6.5M223.5 6.5L222.5 6.5L221.5 7.5L221.5 9.5L221.5 10.5L221.5 12.5L222.5 13.5L223.5 13.5L224.5 13.5L225.5 13.5L226.5 12.5L226.5 10.5L226.5 9.5L226.5 7.5L225.5 6.5L224.5 6.5L223.5 6.5M363.5 6.5L362.5 6.5L361.5 7.5L361.5 9.5L361.5 10.5L361.5 12.5L362.5 13.5L363.5 13.5L364.5 13.5L365.5 13.5L366.5 12.5L366.5 10.5L366.5 9.5L366.5 7.5L365.5 6.5L364.5 6.5L363.5 6.5M373.5 6.5L369.5 11.5L375.5 11.5M373.5 6.5L373.5 13.5M378.5 8.5L378.5 9.5M378.5 13.5L378.5 13.5M382.5 6.5L381.5 6.5L380.5 7.5L380.5 9.5L380.5 10.5L380.5 12.5L381.5 13.5L382.5 13.5L383.5 13.5L384.5 13.5L385.5 12.5L385.5 10.5L385.5 9.5L385.5 7.5L384.5 6.5L383.5 6.5L382.5 6.5M391.5 6.5L390.5 6.5L389.5 7.5L389.5 9.5L389.5 10.5L389.5 12.5L390.5 13.5L391.5 13.5L392.5 13.5L393.5 13.5L394.5 12.5L394.5 10.5L394.5 9.5L394.5 7.5L393.5 6.5L392.5 6.5L391.5 6.5M530.5 6.5L529.5 6.5L528.5 7.5L528.5 9.5L528.5 10.5L528.5 12.5L529.5 13.5L530.5 13.5L531.5 13.5L532.5 13.5L533.5 12.5L533.5 10.5L533.5 9.5L533.5 7.5L532.5 6.5L531.5 6.5L530.5 6.5M541.5 7.5L540.5 6.5L539.5 6.5L537.5 6.5L537.5 7.5L536.5 9.5L536.5 11.5L537.5 12.5L537.5 13.5L539.5 13.5L540.5 13.5L541.5 12.5L541.5 11.5L541.5 10.5L540.5 9.5L539.5 9.5L537.5 9.5L537.5 10.5L536.5 11.5M545.5 8.5L545.5 9.5M545.5 13.5L545.5 13.5M549.5 6.5L548.5 6.5L547.5 7.5L547.5 9.5L547.5 10.5L547.5 12.5L548.5 13.5L549.5 13.5L550.5 13.5L551.5 13.5L552.5 12.5L552.5 10.5L552.5 9.5L552.5 7.5L551.5 6.5L550.5 6.5L549.5 6.5M558.5 6.5L557.5 6.5L556.5 7.5L556.5 9.5L556.5 10.5L556.5 12.5L557.5 13.5L558.5 13.5L559.5 13.5L560.5 13.5L561.5 12.5L561.5 10.5L561.5 9.5L561.5 7.5L560.5 6.5L559.5 6.5L558.5 6.5M21.5 53.5L21.5 61.5M18.5 53.5L23.5 53.5M26.5 53.5L26.5 61.5M26.5 53.5L29.5 61.5M32.5 53.5L29.5 61.5M32.5 53.5L32.5 61.5M45.5 54.5L44.5 53.5L43.5 53.5L42.5 53.5L41.5 53.5L40.5 54.5L40.5 55.5L40.5 56.5L41.5 56.5L44.5 57.5L44.5 58.5L45.5 58.5L45.5 59.5L45.5 60.5L44.5 61.5L43.5 61.5L42.5 61.5L41.5 61.5L40.5 60.5M48.5 53.5L48.5 59.5L48.5 60.5L49.5 61.5L50.5 61.5L51.5 61.5L52.5 61.5L53.5 60.5L53.5 59.5L53.5 53.5M56.5 53.5L56.5 61.5M56.5 53.5L59.5 53.5L60.5 53.5L61.5 54.5L61.5 55.5L61.5 56.5L60.5 56.5L59.5 57.5M56.5 57.5L59.5 57.5L60.5 57.5L61.5 58.5L61.5 59.5L61.5 60.5L60.5 61.5L59.5 61.5L56.5 61.5M65.5 53.5L65.5 61.5M65.5 53.5L68.5 61.5M71.5 53.5L68.5 61.5M71.5 53.5L71.5 61.5M76.5 53.5L75.5 53.5L74.5 54.5L74.5 55.5L74.5 56.5L74.5 58.5L74.5 59.5L74.5 60.5L75.5 61.5L76.5 61.5L77.5 61.5L78.5 61.5L79.5 60.5L79.5 59.5L80.5 58.5L80.5 56.5L79.5 55.5L79.5 54.5L78.5 53.5L77.5 53.5L76.5 53.5M82.5 53.5L82.5 61.5M82.5 53.5L85.5 53.5L86.5 53.5L86.5 54.5L87.5 55.5L87.5 56.5L87.5 58.5L87.5 59.5L86.5 60.5L86.5 61.5L85.5 61.5L82.5 61.5M90.5 53.5L90.5 61.5M90.5 53.5L95.5 53.5M90.5 57.5L93.5 57.5M90.5 61.5L95.5 61.5M105.5 30.5L102.5 30.5L101.5 33.5L102.5 33.5L103.5 33.5L104.5 33.5L105.5 33.5L106.5 34.5L106.5 35.5L106.5 36.5L106.5 37.5L105.5 38.5L104.5 38.5L103.5 38.5L102.5 38.5L101.5 37.5L101.5 36.5M105.5 39.5L101.5 44.5L106.5 44.5M105.5 39.5L105.5 47.5M102.5 48.5L106.5 48.5L104.5 51.5L105.5 51.5L106.5 52.5L106.5 53.5L106.5 54.5L106.5 55.5L105.5 56.5L104.5 56.5L103.5 56.5L102.5 56.5L101.5 55.5L101.5 54.5M101.5 60.5L102.5 59.5L102.5 58.5L103.5 58.5L104.5 58.5L105.5 58.5L105.5 59.5L106.5 60.5L105.5 61.5L105.5 62.5L101.5 66.5L106.5 66.5M101.5 69.5L102.5 68.5L103.5 67.5L103.5 75.5M8.5 100.5L8.5 108.5M8.5 108.5L13.5 108.5M17.5 100.5L14.5 108.5M17.5 100.5L20.5 108.5M15.5 105.5L18.5 105.5M26.5 101.5L25.5 100.5L24.5 100.5L23.5 100.5L22.5 100.5L21.5 101.5L21.5 102.5L21.5 103.5L22.5 103.5L25.5 104.5L25.5 105.5L26.5 105.5L26.5 106.5L26.5 107.5L25.5 108.5L24.5 108.5L23.5 108.5L22.5 108.5L21.5 107.5M35.5 102.5L34.5 101.5L33.5 100.5L31.5 100.5L30.5 100.5L30.5 101.5L29.5 102.5L29.5 103.5L29.5 105.5L29.5 106.5L30.5 107.5L30.5 108.5L31.5 108.5L33.5 108.5L34.5 107.5L35.5 106.5M39.5 100.5L38.5 100.5L37.5 101.5L37.5 102.5L37.5 103.5L37.5 105.5L37.5 106.5L37.5 107.5L38.5 108.5L39.5 108.5L40.5 108.5L41.5 108.5L42.5 107.5L42.5 106.5L43.5 105.5L43.5 103.5L42.5 102.5L42.5 101.5L41.5 100.5L40.5 100.5L39.5 100.5M52.5 98.5L45.5 111.5M54.5 100.5L54.5 108.5M54.5 100.5L59.5 100.5M54.5 104.5L57.5 104.5M54.5 108.5L59.5 108.5M62.5 100.5L62.5 108.5M67.5 100.5L67.5 108.5M64.5 100.5L69.5 100.5M80.5 98.5L79.5 99.5L79.5 100.5L78.5 102.5L77.5 104.5L77.5 105.5L78.5 107.5L79.5 109.5L79.5 110.5L80.5 111.5M83.5 100.5L83.5 108.5M83.5 100.5L86.5 100.5L87.5 100.5L87.5 101.5L88.5 102.5L88.5 103.5L88.5 105.5L88.5 106.5L87.5 107.5L87.5 108.5L86.5 108.5L83.5 108.5M91.5 100.5L91.5 108.5M91.5 100.5L94.5 100.5L95.5 100.5L96.5 101.5L96.5 102.5L96.5 103.5L95.5 104.5L94.5 104.5L91.5 104.5M98.5 98.5L99.5 99.5L100.5 100.5L100.5 102.5L101.5 104.5L101.5 105.5L100.5 107.5L100.5 109.5L99.5 110.5L98.5 111.5M51.5 141.5L50.5 141.5L49.5 142.5L49.5 143.5L49.5 144.5L49.5 146.5L49.5 147.5L49.5 148.5L50.5 149.5L51.5 149.5L52.5 149.5L53.5 149.5L54.5 148.5L54.5 147.5L55.5 146.5L55.5 144.5L54.5 143.5L54.5 142.5L53.5 141.5L52.5 141.5L51.5 141.5M63.5 142.5L62.5 141.5L61.5 141.5L60.5 141.5L59.5 141.5L58.5 142.5L58.5 143.5L58.5 144.5L59.5 144.5L62.5 145.5L62.5 146.5L63.5 146.5L63.5 147.5L63.5 148.5L62.5 149.5L61.5 149.5L60.5 149.5L59.5 149.5L58.5 148.5M65.5 149.5L71.5 149.5M73.5 141.5L77.5 141.5L75.5 144.5L76.5 144.5L77.5 145.5L77.5 146.5L77.5 147.5L77.5 148.5L76.5 149.5L75.5 149.5L74.5 149.5L73.5 149.5L72.5 148.5L72.5 147.5M81.5 141.5L85.5 141.5L83.5 144.5L84.5 144.5L85.5 145.5L85.5 146.5L85.5 147.5L85.5 148.5L84.5 149.5L83.5 149.5L82.5 149.5L81.5 149.5L80.5 148.5L80.5 147.5M92.5 141.5L88.5 146.5L94.5 146.5M92.5 141.5L92.5 149.5M96.5 143.5L97.5 142.5L97.5 141.5L98.5 141.5L99.5 141.5L100.5 141.5L100.5 142.5L101.5 143.5L100.5 144.5L100.5 145.5L96.5 149.5L101.5 149.5M51.5 167.5L50.5 167.5L49.5 168.5L49.5 169.5L49.5 170.5L49.5 172.5L49.5 173.5L49.5 174.5L50.5 175.5L51.5 175.5L52.5 175.5L53.5 175.5L54.5 174.5L54.5 173.5L55.5 172.5L55.5 170.5L54.5 169.5L54.5 168.5L53.5 167.5L52.5 167.5L51.5 167.5M63.5 168.5L62.5 167.5L61.5 167.5L60.5 167.5L59.5 167.5L58.5 168.5L58.5 169.5L58.5 170.5L59.5 170.5L62.5 171.5L62.5 172.5L63.5 172.5L63.5 173.5L63.5 174.5L62.5 175.5L61.5 175.5L60.5 175.5L59.5 175.5L58.5 174.5M65.5 175.5L71.5 175.5M74.5 167.5L78.5 167.5L76.5 170.5L77.5 170.5L78.5 171.5L78.5 172.5L78.5 173.5L78.5 174.5L77.5 175.5L76.5 175.5L75.5 175.5L74.5 175.5L73.5 174.5L73.5 173.5M82.5 167.5L86.5 167.5L84.5 170.5L85.5 170.5L86.5 171.5L86.5 172.5L86.5 173.5L86.5 174.5L85.5 175.5L84.5 175.5L83.5 175.5L82.5 175.5L81.5 174.5L81.5 173.5M94.5 168.5L93.5 167.5L92.5 167.5L90.5 167.5L90.5 169.5L89.5 170.5L89.5 172.5L90.5 174.5L90.5 175.5L92.5 175.5L93.5 175.5L94.5 174.5L94.5 173.5L94.5 172.5L94.5 171.5L93.5 170.5L92.5 170.5L90.5 170.5L90.5 171.5L89.5 172.5M99.5 169.5L100.5 168.5L101.5 167.5L101.5 175.5M51.5 192.5L50.5 192.5L49.5 193.5L49.5 194.5L49.5 195.5L49.5 197.5L49.5 198.5L49.5 199.5L50.5 200.5L51.5 200.5L52.5 200.5L53.5 200.5L54.5 199.5L54.5 198.5L55.5 197.5L55.5 195.5L54.5 194.5L54.5 193.5L53.5 192.5L52.5 192.5L51.5 192.5M63.5 193.5L62.5 192.5L61.5 192.5L60.5 192.5L59.5 192.5L58.5 193.5L58.5 194.5L58.5 195.5L59.5 195.5L62.5 196.5L62.5 197.5L63.5 197.5L63.5 198.5L63.5 199.5L62.5 200.5L61.5 200.5L60.5 200.5L59.5 200.5L58.5 199.5M65.5 200.5L71.5 200.5M73.5 192.5L77.5 192.5L75.5 195.5L76.5 195.5L77.5 196.5L77.5 197.5L77.5 198.5L77.5 199.5L76.5 200.5L75.5 200.5L74.5 200.5L73.5 200.5L72.5 199.5L72.5 198.5M81.5 192.5L85.5 192.5L83.5 195.5L84.5 195.5L85.5 196.5L85.5 197.5L85.5 198.5L85.5 199.5L84.5 200.5L83.5 200.5L82.5 200.5L81.5 200.5L80.5 199.5L80.5 198.5M90.5 192.5L89.5 192.5L88.5 193.5L88.5 194.5L89.5 195.5L91.5 195.5L92.5 196.5L93.5 197.5L93.5 198.5L93.5 199.5L92.5 200.5L91.5 200.5L90.5 200.5L89.5 200.5L88.5 199.5L88.5 198.5L88.5 197.5L89.5 196.5L90.5 195.5L92.5 195.5L93.5 194.5L93.5 193.5L92.5 192.5L91.5 192.5L90.5 192.5M101.5 192.5L97.5 200.5M96.5 192.5L101.5 192.5M51.5 218.5L50.5 218.5L49.5 219.5L49.5 220.5L49.5 221.5L49.5 223.5L49.5 224.5L49.5 225.5L50.5 226.5L51.5 226.5L52.5 226.5L53.5 226.5L54.5 225.5L54.5 224.5L55.5 223.5L55.5 221.5L54.5 220.5L54.5 219.5L53.5 218.5L52.5 218.5L51.5 218.5M62.5 219.5L61.5 218.5L60.5 218.5L59.5 218.5L58.5 218.5L57.5 219.5L57.5 220.5L57.5 221.5L58.5 221.5L61.5 222.5L61.5 223.5L62.5 223.5L62.5 224.5L62.5 225.5L61.5 226.5L60.5 226.5L59.5 226.5L58.5 226.5L57.5 225.5M65.5 226.5L71.5 226.5M73.5 218.5L77.5 218.5L75.5 221.5L76.5 221.5L77.5 222.5L77.5 223.5L77.5 224.5L77.5 225.5L76.5 226.5L75.5 226.5L74.5 226.5L73.5 226.5L72.5 225.5L72.5 224.5M81.5 218.5L85.5 218.5L83.5 221.5L84.5 221.5L85.5 222.5L85.5 223.5L85.5 224.5L85.5 225.5L84.5 226.5L83.5 226.5L82.5 226.5L81.5 226.5L80.5 225.5L80.5 224.5M90.5 218.5L89.5 218.5L88.5 219.5L88.5 220.5L89.5 221.5L91.5 221.5L92.5 222.5L93.5 223.5L93.5 224.5L93.5 225.5L92.5 226.5L91.5 226.5L90.5 226.5L89.5 226.5L88.5 225.5L88.5 224.5L88.5 223.5L89.5 222.5L90.5 221.5L92.5 221.5L93.5 220.5L93.5 219.5L92.5 218.5L91.5 218.5L90.5 218.5M101.5 221.5L100.5 222.5L100.5 223.5L99.5 223.5L98.5 223.5L97.5 223.5L96.5 222.5L96.5 221.5L96.5 220.5L96.5 219.5L97.5 218.5L98.5 218.5L99.5 218.5L100.5 218.5L100.5 219.5L101.5 221.5L101.5 223.5L100.5 224.5L100.5 226.5L99.5 226.5L98.5 226.5L97.5 226.5L96.5 225.5M51.5 243.5L50.5 243.5L49.5 244.5L49.5 245.5L49.5 246.5L49.5 248.5L49.5 249.5L49.5 250.5L50.5 251.5L51.5 251.5L52.5 251.5L53.5 251.5L54.5 250.5L54.5 249.5L55.5 248.5L55.5 246.5L54.5 245.5L54.5 244.5L53.5 243.5L52.5 243.5L51.5 243.5M63.5 244.5L62.5 243.5L61.5 243.5L60.5 243.5L59.5 243.5L58.5 244.5L58.5 245.5L58.5 246.5L59.5 246.5L62.5 247.5L62.5 248.5L63.5 248.5L63.5 249.5L63.5 250.5L62.5 251.5L61.5 251.5L60.5 251.5L59.5 251.5L58.5 250.5M65.5 251.5L71.5 251.5M73.5 243.5L77.5 243.5L75.5 246.5L76.5 246.5L77.5 247.5L77.5 248.5L77.5 249.5L77.5 250.5L76.5 251.5L75.5 251.5L74.5 251.5L73.5 251.5L72.5 250.5L72.5 249.5M81.5 243.5L85.5 243.5L83.5 246.5L84.5 246.5L85.5 247.5L85.5 248.5L85.5 249.5L85.5 250.5L84.5 251.5L83.5 251.5L82.5 251.5L81.5 251.5L80.5 250.5L80.5 249.5M93.5 246.5L92.5 247.5L92.5 248.5L91.5 248.5L90.5 248.5L89.5 248.5L88.5 247.5L88.5 246.5L88.5 245.5L88.5 244.5L89.5 243.5L90.5 243.5L91.5 243.5L92.5 243.5L92.5 244.5L93.5 246.5L93.5 248.5L92.5 249.5L92.5 251.5L91.5 251.5L90.5 251.5L89.5 251.5L88.5 250.5M98.5 243.5L97.5 243.5L96.5 245.5L96.5 246.5L96.5 248.5L96.5 249.5L97.5 251.5L98.5 251.5L99.5 251.5L100.5 251.5L101.5 249.5L101.5 248.5L101.5 246.5L101.5 245.5L100.5 243.5L99.5 243.5L98.5 243.5M51.5 269.5L50.5 269.5L49.5 270.5L49.5 271.5L49.5 272.5L49.5 274.5L49.5 275.5L49.5 276.5L50.5 277.5L51.5 277.5L52.5 277.5L53.5 277.5L54.5 276.5L54.5 275.5L55.5 274.5L55.5 272.5L54.5 271.5L54.5 270.5L53.5 269.5L52.5 269.5L51.5 269.5M63.5 270.5L62.5 269.5L61.5 269.5L60.5 269.5L59.5 269.5L58.5 270.5L58.5 271.5L58.5 272.5L59.5 272.5L62.5 273.5L62.5 274.5L63.5 274.5L63.5 275.5L63.5 276.5L62.5 277.5L61.5 277.5L60.5 277.5L59.5 277.5L58.5 276.5M65.5 277.5L71.5 277.5M73.5 269.5L77.5 269.5L75.5 272.5L76.5 272.5L77.5 273.5L77.5 274.5L77.5 275.5L77.5 276.5L76.5 277.5L75.5 277.5L74.5 277.5L73.5 277.5L72.5 276.5L72.5 275.5M84.5 269.5L80.5 274.5L86.5 274.5M84.5 269.5L84.5 277.5M90.5 269.5L89.5 269.5L88.5 271.5L88.5 272.5L88.5 274.5L88.5 275.5L89.5 277.5L90.5 277.5L91.5 277.5L92.5 277.5L93.5 275.5L93.5 274.5L93.5 272.5L93.5 271.5L92.5 269.5L91.5 269.5L90.5 269.5M100.5 269.5L97.5 269.5L96.5 272.5L97.5 272.5L98.5 272.5L99.5 272.5L100.5 272.5L101.5 273.5L101.5 274.5L101.5 275.5L101.5 276.5L100.5 277.5L99.5 277.5L98.5 277.5L97.5 277.5L96.5 276.5L96.5 275.5M51.5 294.5L50.5 294.5L49.5 295.5L49.5 296.5L49.5 297.5L49.5 299.5L49.5 300.5L49.5 301.5L50.5 302.5L51.5 302.5L52.5 302.5L53.5 302.5L54.5 301.5L54.5 300.5L55.5 299.5L55.5 297.5L54.5 296.5L54.5 295.5L53.5 294.5L52.5 294.5L51.5 294.5M63.5 295.5L62.5 294.5L61.5 294.5L60.5 294.5L59.5 294.5L58.5 295.5L58.5 296.5L58.5 297.5L59.5 297.5L62.5 298.5L62.5 299.5L63.5 299.5L63.5 300.5L63.5 301.5L62.5 302.5L61.5 302.5L60.5 302.5L59.5 302.5L58.5 301.5M65.5 302.5L71.5 302.5M73.5 294.5L77.5 294.5L75.5 297.5L76.5 297.5L77.5 298.5L77.5 299.5L77.5 300.5L77.5 301.5L76.5 302.5L75.5 302.5L74.5 302.5L73.5 302.5L72.5 301.5L72.5 300.5M84.5 294.5L80.5 299.5L86.5 299.5M84.5 294.5L84.5 302.5M90.5 294.5L89.5 294.5L88.5 296.5L88.5 297.5L88.5 299.5L88.5 300.5L89.5 302.5L90.5 302.5L91.5 302.5L92.5 302.5L93.5 300.5L93.5 299.5L93.5 297.5L93.5 296.5L92.5 294.5L91.5 294.5L90.5 294.5M101.5 295.5L100.5 294.5L99.5 294.5L97.5 294.5L97.5 296.5L96.5 297.5L96.5 299.5L97.5 301.5L97.5 302.5L99.5 302.5L100.5 302.5L101.5 301.5L101.5 300.5L101.5 299.5L101.5 298.5L100.5 297.5L99.5 297.5L97.5 297.5L97.5 298.5L96.5 299.5M51.5 320.5L50.5 320.5L49.5 321.5L49.5 322.5L49.5 323.5L49.5 325.5L49.5 326.5L49.5 327.5L50.5 328.5L51.5 328.5L52.5 328.5L53.5 328.5L54.5 327.5L54.5 326.5L55.5 325.5L55.5 323.5L54.5 322.5L54.5 321.5L53.5 320.5L52.5 320.5L51.5 320.5M63.5 321.5L62.5 320.5L61.5 320.5L60.5 320.5L59.5 320.5L58.5 321.5L58.5 322.5L58.5 323.5L59.5 323.5L62.5 324.5L62.5 325.5L63.5 325.5L63.5 326.5L63.5 327.5L62.5 328.5L61.5 328.5L60.5 328.5L59.5 328.5L58.5 327.5M65.5 328.5L71.5 328.5M73.5 320.5L77.5 320.5L75.5 323.5L76.5 323.5L77.5 324.5L77.5 325.5L77.5 326.5L77.5 327.5L76.5 328.5L75.5 328.5L74.5 328.5L73.5 328.5L72.5 327.5L72.5 326.5M84.5 320.5L81.5 320.5L80.5 323.5L81.5 323.5L82.5 323.5L83.5 323.5L84.5 323.5L85.5 324.5L85.5 325.5L85.5 326.5L85.5 327.5L84.5 328.5L83.5 328.5L82.5 328.5L81.5 328.5L80.5 327.5L80.5 326.5M89.5 320.5L93.5 320.5L91.5 323.5L92.5 323.5L93.5 324.5L93.5 325.5L93.5 326.5L93.5 327.5L92.5 328.5L91.5 328.5L90.5 328.5L89.5 328.5L88.5 327.5L88.5 326.5M96.5 322.5L97.5 321.5L97.5 320.5L98.5 320.5L99.5 320.5L100.5 320.5L100.5 321.5L101.5 322.5L100.5 323.5L100.5 324.5L96.5 328.5L101.5 328.5M51.5 345.5L50.5 345.5L49.5 346.5L49.5 347.5L49.5 348.5L49.5 350.5L49.5 351.5L49.5 352.5L50.5 353.5L51.5 353.5L52.5 353.5L53.5 353.5L54.5 352.5L54.5 351.5L55.5 350.5L55.5 348.5L54.5 347.5L54.5 346.5L53.5 345.5L52.5 345.5L51.5 345.5M63.5 346.5L62.5 345.5L61.5 345.5L60.5 345.5L59.5 345.5L58.5 346.5L58.5 347.5L58.5 348.5L59.5 348.5L62.5 349.5L62.5 350.5L63.5 350.5L63.5 351.5L63.5 352.5L62.5 353.5L61.5 353.5L60.5 353.5L59.5 353.5L58.5 352.5M65.5 353.5L71.5 353.5M73.5 345.5L77.5 345.5L75.5 348.5L76.5 348.5L77.5 349.5L77.5 350.5L77.5 351.5L77.5 352.5L76.5 353.5L75.5 353.5L74.5 353.5L73.5 353.5L72.5 352.5L72.5 351.5M84.5 345.5L81.5 345.5L80.5 348.5L81.5 348.5L82.5 348.5L83.5 348.5L84.5 348.5L85.5 349.5L85.5 350.5L85.5 351.5L85.5 352.5L84.5 353.5L83.5 353.5L82.5 353.5L81.5 353.5L80.5 352.5L80.5 351.5M93.5 346.5L92.5 345.5L91.5 345.5L89.5 345.5L89.5 347.5L88.5 348.5L88.5 350.5L89.5 352.5L89.5 353.5L91.5 353.5L92.5 353.5L93.5 352.5L93.5 351.5L93.5 350.5L93.5 349.5L92.5 348.5L91.5 348.5L89.5 348.5L89.5 349.5L88.5 350.5M98.5 345.5L97.5 345.5L96.5 346.5L96.5 347.5L97.5 348.5L99.5 348.5L100.5 349.5L101.5 350.5L101.5 351.5L101.5 352.5L100.5 353.5L99.5 353.5L98.5 353.5L97.5 353.5L96.5 352.5L96.5 351.5L96.5 350.5L97.5 349.5L98.5 348.5L100.5 348.5L101.5 347.5L101.5 346.5L100.5 345.5L99.5 345.5L98.5 345.5M51.5 371.5L50.5 371.5L49.5 372.5L49.5 373.5L49.5 374.5L49.5 376.5L49.5 377.5L49.5 378.5L50.5 379.5L51.5 379.5L52.5 379.5L53.5 379.5L54.5 378.5L54.5 377.5L55.5 376.5L55.5 374.5L54.5 373.5L54.5 372.5L53.5 371.5L52.5 371.5L51.5 371.5M63.5 372.5L62.5 371.5L61.5 371.5L60.5 371.5L59.5 371.5L58.5 372.5L58.5 373.5L58.5 374.5L59.5 374.5L62.5 375.5L62.5 376.5L63.5 376.5L63.5 377.5L63.5 378.5L62.5 379.5L61.5 379.5L60.5 379.5L59.5 379.5L58.5 378.5M65.5 379.5L71.5 379.5M73.5 371.5L77.5 371.5L75.5 374.5L76.5 374.5L77.5 375.5L77.5 376.5L77.5 377.5L77.5 378.5L76.5 379.5L75.5 379.5L74.5 379.5L73.5 379.5L72.5 378.5L72.5 377.5M84.5 371.5L81.5 371.5L80.5 374.5L81.5 374.5L82.5 374.5L83.5 374.5L84.5 374.5L85.5 375.5L85.5 376.5L85.5 377.5L85.5 378.5L84.5 379.5L83.5 379.5L82.5 379.5L81.5 379.5L80.5 378.5L80.5 377.5M93.5 371.5L89.5 379.5M88.5 371.5L93.5 371.5M98.5 371.5L97.5 371.5L96.5 373.5L96.5 374.5L96.5 376.5L96.5 377.5L97.5 379.5L98.5 379.5L99.5 379.5L100.5 379.5L101.5 377.5L101.5 376.5L101.5 374.5L101.5 373.5L100.5 371.5L99.5 371.5L98.5 371.5M51.5 397.5L50.5 397.5L49.5 398.5L49.5 399.5L49.5 400.5L49.5 402.5L49.5 403.5L49.5 404.5L50.5 405.5L51.5 405.5L52.5 405.5L53.5 405.5L54.5 404.5L54.5 403.5L55.5 402.5L55.5 400.5L54.5 399.5L54.5 398.5L53.5 397.5L52.5 397.5L51.5 397.5M62.5 398.5L61.5 397.5L60.5 397.5L59.5 397.5L58.5 397.5L57.5 398.5L57.5 399.5L57.5 400.5L58.5 400.5L61.5 401.5L61.5 402.5L62.5 402.5L62.5 403.5L62.5 404.5L61.5 405.5L60.5 405.5L59.5 405.5L58.5 405.5L57.5 404.5M64.5 405.5L70.5 405.5M72.5 397.5L76.5 397.5L74.5 400.5L75.5 400.5L76.5 401.5L76.5 402.5L76.5 403.5L76.5 404.5L75.5 405.5L74.5 405.5L73.5 405.5L72.5 405.5L71.5 404.5L71.5 403.5M84.5 398.5L83.5 397.5L82.5 397.5L80.5 397.5L80.5 399.5L79.5 400.5L79.5 402.5L80.5 404.5L80.5 405.5L82.5 405.5L83.5 405.5L84.5 404.5L84.5 403.5L84.5 402.5L84.5 401.5L83.5 400.5L82.5 400.5L80.5 400.5L80.5 401.5L79.5 402.5M91.5 397.5L88.5 397.5L87.5 400.5L88.5 400.5L89.5 400.5L90.5 400.5L91.5 400.5L92.5 401.5L92.5 402.5L92.5 403.5L92.5 404.5L91.5 405.5L90.5 405.5L89.5 405.5L88.5 405.5L87.5 404.5L87.5 403.5M99.5 397.5L95.5 402.5L101.5 402.5M99.5 397.5L99.5 405.5M7.5 445.5L7.5 453.5M7.5 453.5L12.5 453.5M16.5 445.5L13.5 453.5M16.5 445.5L19.5 453.5M14.5 450.5L17.5 450.5M25.5 446.5L24.5 445.5L23.5 445.5L22.5 445.5L21.5 445.5L20.5 446.5L20.5 447.5L20.5 448.5L21.5 448.5L24.5 449.5L24.5 450.5L25.5 450.5L25.5 451.5L25.5 452.5L24.5 453.5L23.5 453.5L22.5 453.5L21.5 453.5L20.5 452.5M34.5 447.5L33.5 446.5L32.5 445.5L30.5 445.5L29.5 445.5L29.5 446.5L28.5 447.5L28.5 448.5L28.5 450.5L28.5 451.5L29.5 452.5L29.5 453.5L30.5 453.5L32.5 453.5L33.5 452.5L34.5 451.5M39.5 445.5L38.5 445.5L37.5 446.5L37.5 447.5L37.5 448.5L37.5 450.5L37.5 451.5L37.5 452.5L38.5 453.5L39.5 453.5L40.5 453.5L41.5 453.5L42.5 452.5L42.5 451.5L43.5 450.5L43.5 448.5L42.5 447.5L42.5 446.5L41.5 445.5L40.5 445.5L39.5 445.5M45.5 450.5L52.5 450.5M55.5 445.5L55.5 453.5M55.5 449.5L56.5 448.5L57.5 448.5L58.5 448.5L59.5 448.5L59.5 449.5L60.5 450.5L60.5 451.5L59.5 452.5L59.5 453.5L58.5 453.5L57.5 453.5L56.5 453.5L55.5 452.5M64.5 448.5L64.5 451.5L64.5 453.5L65.5 453.5L66.5 453.5L67.5 453.5L68.5 451.5M68.5 448.5L68.5 453.5M72.5 445.5L71.5 445.5L71.5 447.5L71.5 453.5M69.5 448.5L72.5 448.5M77.5 445.5L76.5 445.5L76.5 447.5L76.5 453.5M74.5 448.5L77.5 448.5M79.5 450.5L84.5 450.5L84.5 449.5L83.5 448.5L82.5 448.5L81.5 448.5L80.5 448.5L80.5 449.5L79.5 450.5L79.5 451.5L80.5 452.5L80.5 453.5L81.5 453.5L82.5 453.5L83.5 453.5L84.5 452.5M87.5 448.5L87.5 453.5M87.5 450.5L88.5 449.5L89.5 448.5L90.5 448.5M87.5 425.5L88.5 424.5L89.5 423.5L89.5 431.5M95.5 423.5L94.5 423.5L93.5 425.5L93.5 426.5L93.5 428.5L93.5 429.5L94.5 431.5L95.5 431.5L96.5 431.5L97.5 431.5L98.5 429.5L98.5 428.5L98.5 426.5L98.5 425.5L97.5 423.5L96.5 423.5L95.5 423.5M103.5 423.5L102.5 423.5L101.5 425.5L101.5 426.5L101.5 428.5L101.5 429.5L102.5 431.5L103.5 431.5L104.5 431.5L105.5 431.5L106.5 429.5L106.5 428.5L106.5 426.5L106.5 425.5L105.5 423.5L104.5 423.5L103.5 423.5M95.5 435.5L94.5 435.5L93.5 436.5L93.5 437.5L94.5 438.5L96.5 438.5L97.5 439.5L98.5 440.5L98.5 441.5L98.5 442.5L97.5 443.5L96.5 443.5L95.5 443.5L94.5 443.5L93.5 442.5L93.5 441.5L93.5 440.5L94.5 439.5L95.5 438.5L97.5 438.5L98.5 437.5L98.5 436.5L97.5 435.5L96.5 435.5L95.5 435.5M103.5 435.5L102.5 435.5L101.5 437.5L101.5 438.5L101.5 440.5L101.5 441.5L102.5 443.5L103.5 443.5L104.5 443.5L105.5 443.5L106.5 441.5L106.5 440.5L106.5 438.5L106.5 437.5L105.5 435.5L104.5 435.5L103.5 435.5M93.5 471.5L94.5 470.5L94.5 469.5L95.5 469.5L96.5 469.5L97.5 469.5L97.5 470.5L98.5 471.5L97.5 472.5L97.5 473.5L93.5 477.5L98.5 477.5M103.5 469.5L102.5 469.5L101.5 471.5L101.5 472.5L101.5 474.5L101.5 475.5L102.5 477.5L103.5 477.5L104.5 477.5L105.5 477.5L106.5 475.5L106.5 474.5L106.5 472.5L106.5 471.5L105.5 469.5L104.5 469.5L103.5 469.5M103.5 480.5L102.5 480.5L101.5 481.5L101.5 483.5L101.5 484.5L101.5 486.5L102.5 487.5L103.5 487.5L104.5 487.5L105.5 487.5L106.5 486.5L106.5 484.5L106.5 483.5L106.5 481.5L105.5 480.5L104.5 480.5L103.5 480.5M195.5 494.5L194.5 494.5L193.5 495.5L193.5 497.5L193.5 498.5L193.5 500.5L194.5 501.5L195.5 501.5L196.5 501.5L197.5 501.5L198.5 500.5L198.5 498.5L198.5 497.5L198.5 495.5L197.5 494.5L196.5 494.5L195.5 494.5M201.5 496.5L201.5 495.5L202.5 495.5L202.5 494.5L203.5 494.5L204.5 494.5L205.5 494.5L205.5 495.5L206.5 495.5L206.5 496.5L205.5 497.5L205.5 498.5L201.5 501.5L206.5 501.5M210.5 496.5L210.5 497.5M210.5 501.5L210.5 501.5M214.5 494.5L213.5 494.5L212.5 495.5L212.5 497.5L212.5 498.5L212.5 500.5L213.5 501.5L214.5 501.5L215.5 501.5L216.5 501.5L217.5 500.5L217.5 498.5L217.5 497.5L217.5 495.5L216.5 494.5L215.5 494.5L214.5 494.5M223.5 494.5L222.5 494.5L221.5 495.5L221.5 497.5L221.5 498.5L221.5 500.5L222.5 501.5L223.5 501.5L224.5 501.5L225.5 501.5L226.5 500.5L226.5 498.5L226.5 497.5L226.5 495.5L225.5 494.5L224.5 494.5L223.5 494.5M363.5 494.5L362.5 494.5L361.5 495.5L361.5 497.5L361.5 498.5L361.5 500.5L362.5 501.5L363.5 501.5L364.5 501.5L365.5 501.5L366.5 500.5L366.5 498.5L366.5 497.5L366.5 495.5L365.5 494.5L364.5 494.5L363.5 494.5M373.5 494.5L369.5 499.5L375.5 499.5M373.5 494.5L373.5 501.5M378.5 496.5L378.5 497.5M378.5 501.5L378.5 501.5M382.5 494.5L381.5 494.5L380.5 495.5L380.5 497.5L380.5 498.5L380.5 500.5L381.5 501.5L382.5 501.5L383.5 501.5L384.5 501.5L385.5 500.5L385.5 498.5L385.5 497.5L385.5 495.5L384.5 494.5L383.5 494.5L382.5 494.5M391.5 494.5L390.5 494.5L389.5 495.5L389.5 497.5L389.5 498.5L389.5 500.5L390.5 501.5L391.5 501.5L392.5 501.5L393.5 501.5L394.5 500.5L394.5 498.5L394.5 497.5L394.5 495.5L393.5 494.5L392.5 494.5L391.5 494.5M530.5 494.5L529.5 494.5L528.5 495.5L528.5 497.5L528.5 498.5L528.5 500.5L529.5 501.5L530.5 501.5L531.5 501.5L532.5 501.5L533.5 500.5L533.5 498.5L533.5 497.5L533.5 495.5L532.5 494.5L531.5 494.5L530.5 494.5M541.5 495.5L540.5 494.5L539.5 494.5L537.5 494.5L537.5 495.5L536.5 497.5L536.5 499.5L537.5 500.5L537.5 501.5L539.5 501.5L540.5 501.5L541.5 500.5L541.5 499.5L541.5 498.5L540.5 497.5L539.5 497.5L537.5 497.5L537.5 498.5L536.5 499.5M545.5 496.5L545.5 497.5M545.5 501.5L545.5 501.5M549.5 494.5L548.5 494.5L547.5 495.5L547.5 497.5L547.5 498.5L547.5 500.5L548.5 501.5L549.5 501.5L550.5 501.5L551.5 501.5L552.5 500.5L552.5 498.5L552.5 497.5L552.5 495.5L551.5 494.5L550.5 494.5L549.5 494.5M558.5 494.5L557.5 494.5L556.5 495.5L556.5 497.5L556.5 498.5L556.5 500.5L557.5 501.5L558.5 501.5L559.5 501.5L560.5 501.5L561.5 500.5L561.5 498.5L561.5 497.5L561.5 495.5L560.5 494.5L559.5 494.5L558.5 494.5M308.5 511.5L309.5 510.5L309.5 509.5L310.5 509.5L311.5 509.5L312.5 509.5L312.5 510.5L313.5 511.5L312.5 512.5L312.5 513.5L308.5 517.5L313.5 517.5M318.5 509.5L317.5 509.5L316.5 511.5L316.5 512.5L316.5 514.5L316.5 515.5L317.5 517.5L318.5 517.5L319.5 517.5L320.5 517.5L320.5 515.5L321.5 514.5L321.5 512.5L320.5 511.5L320.5 509.5L319.5 509.5L318.5 509.5M326.5 509.5L325.5 509.5L324.5 511.5L324.5 512.5L324.5 514.5L324.5 515.5L325.5 517.5L326.5 517.5L328.5 517.5L328.5 515.5L329.5 514.5L329.5 512.5L328.5 511.5L328.5 509.5L326.5 509.5M335.5 509.5L331.5 514.5L337.5 514.5M335.5 509.5L335.5 517.5M345.5 507.5L339.5 520.5M350.5 509.5L349.5 509.5L348.5 511.5L348.5 512.5L348.5 514.5L348.5 515.5L349.5 517.5L350.5 517.5L351.5 517.5L352.5 517.5L352.5 515.5L353.5 514.5L353.5 512.5L352.5 511.5L352.5 509.5L351.5 509.5L350.5 509.5M356.5 509.5L360.5 509.5L358.5 512.5L359.5 512.5L360.5 512.5L360.5 513.5L360.5 514.5L360.5 515.5L360.5 516.5L359.5 517.5L358.5 517.5L357.5 517.5L356.5 517.5L356.5 516.5L355.5 515.5M369.5 507.5L363.5 520.5M374.5 509.5L373.5 509.5L372.5 511.5L372.5 512.5L372.5 514.5L372.5 515.5L373.5 517.5L374.5 517.5L375.5 517.5L376.5 517.5L376.5 515.5L377.5 514.5L377.5 512.5L376.5 511.5L376.5 509.5L375.5 509.5L374.5 509.5M381.5 511.5L381.5 510.5L382.5 509.5L382.5 517.5M395.5 511.5L395.5 510.5L396.5 509.5L396.5 517.5M406.5 512.5L406.5 513.5L405.5 514.5L404.5 514.5L403.5 514.5L402.5 514.5L402.5 513.5L401.5 512.5L401.5 511.5L402.5 510.5L402.5 509.5L403.5 509.5L404.5 509.5L405.5 509.5L406.5 510.5L406.5 512.5L406.5 514.5L406.5 515.5L405.5 517.5L404.5 517.5L403.5 517.5L402.5 517.5L402.5 516.5M409.5 511.5L409.5 512.5M409.5 516.5L409.5 517.5M413.5 509.5L417.5 509.5L415.5 512.5L416.5 512.5L417.5 513.5L417.5 514.5L417.5 515.5L417.5 516.5L416.5 517.5L415.5 517.5L414.5 517.5L413.5 517.5L412.5 516.5L412.5 515.5M425.5 510.5L424.5 509.5L423.5 509.5L422.5 509.5L421.5 509.5L421.5 511.5L420.5 512.5L420.5 514.5L421.5 516.5L421.5 517.5L422.5 517.5L423.5 517.5L424.5 517.5L425.5 516.5L425.5 515.5L425.5 514.5L425.5 513.5L424.5 512.5L423.5 512.5L422.5 512.5L421.5 512.5L421.5 513.5L420.5 514.5M428.5 511.5L428.5 512.5M428.5 516.5L428.5 517.5M433.5 509.5L432.5 509.5L431.5 511.5L431.5 512.5L431.5 514.5L431.5 515.5L432.5 517.5L433.5 517.5L434.5 517.5L435.5 517.5L435.5 515.5L436.5 514.5L436.5 512.5L435.5 511.5L435.5 509.5L434.5 509.5L433.5 509.5M441.5 509.5L440.5 509.5L439.5 511.5L439.5 512.5L439.5 514.5L439.5 515.5L440.5 517.5L441.5 517.5L443.5 517.5L443.5 515.5L444.5 514.5L444.5 512.5L443.5 511.5L443.5 509.5L441.5 509.5M447.5 516.5L447.5 517.5M452.5 509.5L450.5 509.5L450.5 511.5L449.5 512.5L449.5 514.5L450.5 515.5L450.5 517.5L452.5 517.5L453.5 517.5L454.5 515.5L454.5 514.5L454.5 512.5L454.5 511.5L453.5 509.5L452.5 509.5M459.5 509.5L458.5 509.5L458.5 511.5L457.5 512.5L457.5 514.5L458.5 515.5L458.5 517.5L459.5 517.5L460.5 517.5L461.5 517.5L462.5 515.5L462.5 514.5L462.5 512.5L462.5 511.5L461.5 509.5L460.5 509.5L459.5 509.5M467.5 509.5L466.5 509.5L465.5 511.5L465.5 512.5L465.5 514.5L465.5 515.5L466.5 517.5L467.5 517.5L468.5 517.5L469.5 517.5L470.5 515.5L470.5 514.5L470.5 512.5L470.5 511.5L469.5 509.5L468.5 509.5L467.5 509.5" stroke="#ffffff" stroke-width="1" fill="none" stroke-linecap="square"/>
<path d="M20.5 515.5L19.5 514.5L18.5 513.5L16.5 513.5L15.5 513.5L15.5 514.5L14.5 515.5L14.5 516.5L14.5 517.5L14.5 518.5L15.5 519.5L15.5 520.5L16.5 520.5L18.5 520.5L19.5 519.5L20.5 518.5M22.5 514.5L23.5 514.5L24.5 513.5L24.5 520.5" stroke="#ff0000" stroke-width="1" fill="none" stroke-linecap="square"/>
<path d="M41.5 515.5L40.5 514.5L39.5 513.5L37.5 513.5L36.5 513.5L36.5 514.5L35.5 515.5L35.5 516.5L35.5 517.5L35.5 518.5L36.5 519.5L36.5 520.5L37.5 520.5L39.5 520.5L40.5 519.5L41.5 518.5M42.5 515.5L42.5 514.5L43.5 514.5L43.5 513.5L44.5 513.5L45.5 513.5L46.5 513.5L46.5 514.5L47.5 514.5L47.5 515.5L46.5 516.5L46.5 517.5L42.5 520.5L47.5 520.5" stroke="#00ff00" stroke-width="1" fill="none" stroke-linecap="square"/>
<path d="M62.5 515.5L61.5 514.5L60.5 513.5L58.5 513.5L57.5 513.5L57.5 514.5L56.5 515.5L56.5 516.5L56.5 517.5L56.5 518.5L57.5 519.5L57.5 520.5L58.5 520.5L60.5 520.5L61.5 519.5L62.5 518.5M64.5 513.5L68.5 513.5L66.5 516.5L67.5 516.5L68.5 516.5L68.5 517.5L68.5 518.5L68.5 519.5L67.5 520.5L66.5 520.5L65.5 520.5L64.5 520.5L63.5 519.5" stroke="#96e6f0" stroke-width="1" fill="none" stroke-linecap="square"/>
<path d="M77.5 513.5L77.5 520.5M77.5 513.5L82.5 513.5M77.5 516.5L80.5 516.5M77.5 520.5L82.5 520.5M83.5 513.5L83.5 520.5M87.5 513.5L87.5 520.5M84.5 513.5L89.5 513.5" stroke="#ffff00" stroke-width="1" fill="none" stroke-linecap="square"/>
</g>
</svg>
</body></html>
